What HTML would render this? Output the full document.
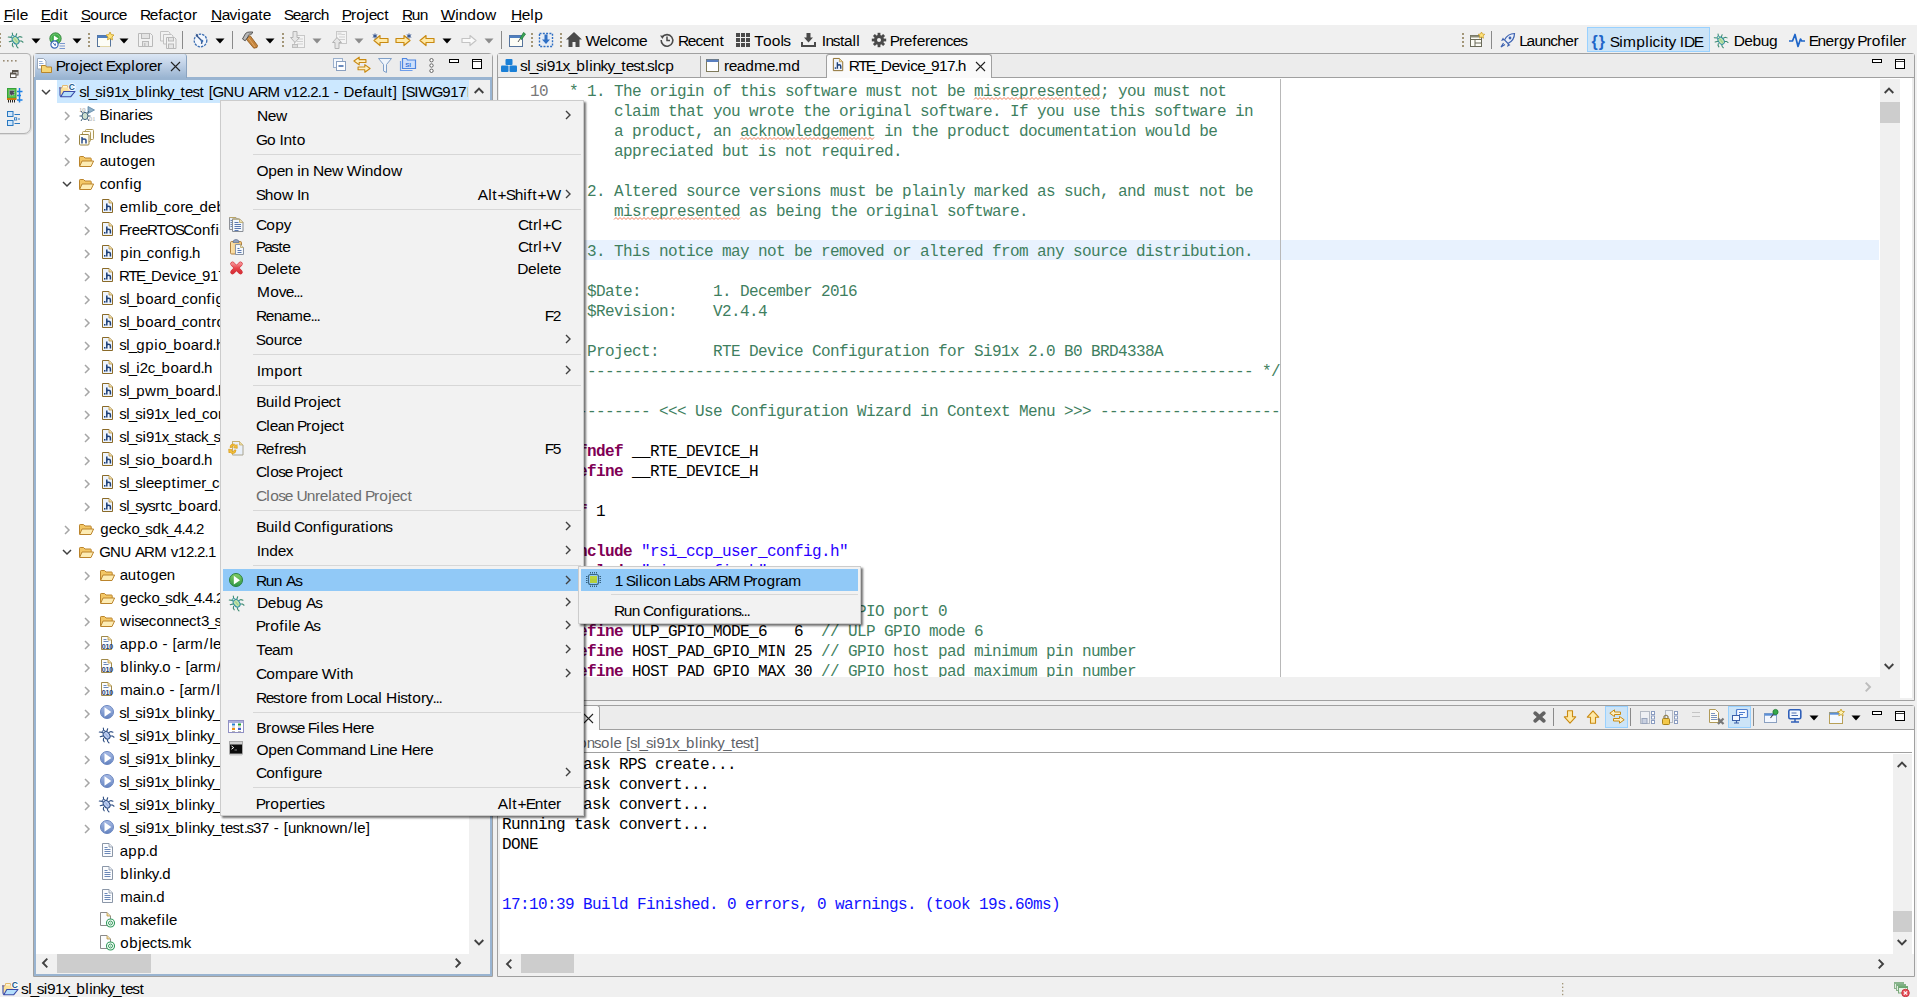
<!DOCTYPE html>
<html><head><meta charset="utf-8"><title>Simplicity IDE</title>
<style>
*{box-sizing:border-box}
html,body{margin:0;padding:0}
body{width:1917px;height:997px;overflow:hidden;background:#f0f0f0;font-family:"Liberation Sans",sans-serif;font-size:15px;color:#000;position:relative}
.a{position:absolute}
.t{position:absolute;white-space:pre;line-height:20px;height:20px}
svg{position:absolute;overflow:visible}
u{text-decoration:underline;text-underline-offset:1px;text-decoration-thickness:1px}
.mono{font-family:"Liberation Mono",monospace;font-size:16px;letter-spacing:-.6px}
.c{color:#3f7f5f}
.k{color:#7f0055;font-weight:bold}
.s{color:#2a00ff}
.us{letter-spacing:-2.1px}
.sg{font-kerning:none}.sg b{font-weight:inherit}.k0{letter-spacing:-0.95px}.k1{letter-spacing:0.55px}.k2{letter-spacing:-0.05px}.k3{letter-spacing:-0.60px}.k4{letter-spacing:-1.00px}.k5{letter-spacing:0.45px}.k6{letter-spacing:0.60px}.k7{letter-spacing:0.70px}.k8{letter-spacing:-0.10px}.k9{letter-spacing:-0.40px}.k10{letter-spacing:-0.45px}.k11{letter-spacing:-0.70px}.k12{letter-spacing:-1.40px}.k13{letter-spacing:0.05px}.k14{letter-spacing:0.10px}.k15{letter-spacing:-0.15px}.k16{letter-spacing:-1.50px}.k17{letter-spacing:-1.25px}.k18{letter-spacing:0.40px}.k19{letter-spacing:-0.20px}.k20{letter-spacing:-0.90px}.k21{letter-spacing:-0.30px}.k22{letter-spacing:-0.55px}.k23{letter-spacing:-0.75px}.k24{letter-spacing:0.20px}.k25{letter-spacing:0.25px}.k26{letter-spacing:-0.80px}.k27{letter-spacing:-1.95px}.k28{letter-spacing:-1.35px}.k29{letter-spacing:-0.65px}.k30{letter-spacing:-1.20px}.k31{letter-spacing:-1.75px}.k32{letter-spacing:0.30px}.k33{letter-spacing:-0.25px}.k34{letter-spacing:-2.35px}.k35{letter-spacing:-1.55px}.k36{letter-spacing:-1.30px}.k37{letter-spacing:0.50px}.k38{letter-spacing:-0.85px}.k39{letter-spacing:-1.90px}.k40{letter-spacing:0.15px}.k41{letter-spacing:-0.35px}.k42{letter-spacing:0.65px}.k43{letter-spacing:-0.50px}.k44{letter-spacing:0.35px}.k45{letter-spacing:0.00px}.k46{letter-spacing:0.75px}.k47{letter-spacing:0.85px}.k48{letter-spacing:-1.10px}.k49{letter-spacing:-1.60px}.k50{letter-spacing:-2.15px}.k51{letter-spacing:-1.15px}.k52{letter-spacing:1.15px}.k53{letter-spacing:1.25px}.k54{letter-spacing:-2.30px}.k55{letter-spacing:-1.80px}.k56{letter-spacing:-1.05px}.k57{letter-spacing:-2.20px}.k58{letter-spacing:-1.70px}.k59{letter-spacing:-2.55px}.k60{letter-spacing:-1.45px}.k61{letter-spacing:0.80px}
</style></head><body>

<div class="a" style="left:0px;top:0px;width:1917px;height:25px;background:#fff"></div>
<div class="t sg" style="left:3.77px;top:5.33px;font-size:15.5px;"><u><b class="k0">F</b></u><b class="k1">i</b><b class="k2">l</b><b class="k3">e</b></div>
<div class="t sg" style="left:40.83px;top:5.33px;font-size:15.5px;"><u><b class="k4">E</b></u><b class="k5">d</b><b class="k6">i</b><b class="k7">t</b></div>
<div class="t sg" style="left:80.83px;top:5.33px;font-size:15.5px;"><u><b class="k4">S</b></u><b class="k8">o</b><b class="k9">u</b><b class="k10">r</b><b class="k11">c</b><b class="k3">e</b></div>
<div class="t sg" style="left:139.90px;top:5.33px;font-size:15.5px;"><b class="k12">R</b><b class="k13">ef</b><b class="k11">a</b><b class="k2">c</b><u><b class="k1">t</b></u><b class="k14">o</b><b class="k15">r</b></div>
<div class="t sg" style="left:210.90px;top:5.33px;font-size:15.5px;"><u><b class="k9">N</b></u><b class="k11">a</b><b class="k8">v</b><b class="k5">i</b><b class="k8">g</b><b class="k13">at</b><b class="k3">e</b></div>
<div class="t sg" style="left:283.83px;top:5.33px;font-size:15.5px;"><b class="k16">S</b><b class="k3">e</b><u><b class="k9">a</b></u><b class="k10">r</b><b class="k11">c</b><b class="k3">h</b></div>
<div class="t sg" style="left:341.83px;top:5.33px;font-size:15.5px;"><u><b class="k17">P</b></u><b class="k14">r</b><b class="k5">o</b><b class="k2">j</b><b class="k11">e</b><b class="k2">c</b><b class="k7">t</b></div>
<div class="t sg" style="left:401.90px;top:5.33px;font-size:15.5px;"><u><b class="k12">R</b></u><b class="k3">un</b></div>
<div class="t sg" style="left:440.69px;top:5.33px;font-size:15.5px;"><u><b class="k2">W</b></u><b class="k2">i</b><b class="k8">n</b><b class="k18">d</b><b class="k14">o</b><b class="k19">w</b></div>
<div class="t sg" style="left:510.90px;top:5.33px;font-size:15.5px;"><u><b class="k9">H</b></u><b class="k2">e</b><b class="k5">l</b><b class="k18">p</b></div>
<div class="a" style="left:0px;top:25px;width:1917px;height:28px;background:#f0f0f0"></div>
<svg style="left:-1px;top:33px" width="2" height="16" viewBox="0 0 2 16"><rect x="0" y="0" width="2" height="2" fill="#a39678"/><rect x="0" y="4" width="2" height="2" fill="#a39678"/><rect x="0" y="8" width="2" height="2" fill="#a39678"/><rect x="0" y="12" width="2" height="2" fill="#a39678"/></svg>
<svg style="left:8px;top:32px" width="16" height="17.0" viewBox="0 0 16 17"><g stroke="#3b8a70" stroke-width="1.100" fill="none" stroke-linecap="round">
<path d="M4.300 1 4.700 3.500M8.700 1.800 7.800 4.300M.3 5 3.500 5.400M1.200 9.700 4.400 8.900M4.600 11.300 4.300 13.200 5.200 14.800M8.300 12.800 8.800 14.500 10 15.800M9.800 5.600 12 4.600 14 5.200M11.300 9 13.500 9 15 10.200"/></g>
<ellipse cx="7.600" cy="8.200" rx="2.900" ry="4.200" transform="rotate(-35 7.600 8.200)" fill="#bfe2aa" stroke="#2a8aa0" stroke-width="1"/>
<path d="M6.300 6.500 9.500 10.500" stroke="#8cc47c" stroke-width=".9"/>
<circle cx="4.700" cy="4.600" r="1.300" fill="#d4ecc4" stroke="#2a8aa0" stroke-width=".9"/></svg>
<svg style="left:31px;top:38px" width="10" height="6" viewBox="0 0 10 6"><path d="M0.5 0.5h9l-4.5 5z" fill="#000"/></svg>
<svg style="left:48.5px;top:31.5px" width="13" height="13" viewBox="0 0 16 16"><circle cx="8" cy="8" r="7" fill="#3fae49" stroke="#2a7d33" stroke-width="1"/><circle cx="8" cy="8" r="5.6" fill="none" stroke="#a9e0a0" stroke-width=".8" opacity=".7"/><path d="M6 4.3 11.6 8 6 11.7z" fill="#fff"/></svg>
<svg style="left:50px;top:40px" width="16" height="10" viewBox="0 0 16 10"><circle cx="4.500" cy="4.500" r="3.600" fill="#fff" stroke="#3a68b8" stroke-width="1.200"/><path d="M3.200 2.800 5.200 5.600M5.200 5.600l.3-2" stroke="#3a68b8" stroke-width="1" fill="none"/><path d="M9.500 3.500h5.500M9.500 6h5.500M9.500 8.500h5.500" stroke="#7a98d0" stroke-width="1"/></svg>
<svg style="left:72px;top:38px" width="10" height="6" viewBox="0 0 10 6"><path d="M0.5 0.5h9l-4.5 5z" fill="#000"/></svg>
<svg style="left:88px;top:33px" width="2" height="16" viewBox="0 0 2 16"><rect x="0" y="0" width="2" height="2" fill="#a39678"/><rect x="0" y="4" width="2" height="2" fill="#a39678"/><rect x="0" y="8" width="2" height="2" fill="#a39678"/><rect x="0" y="12" width="2" height="2" fill="#a39678"/></svg>
<svg style="left:97px;top:32px" width="17" height="16" viewBox="0 0 17 16"><rect x=".5" y="3.5" width="13" height="11" fill="#fdfdf6" stroke="#56749c" stroke-width="1"/><rect x=".5" y="3.5" width="13" height="2.5" fill="#4f7fc0"/><path d="M13 0l1.2 2.6 2.8.4-2 2 .5 2.8L13 6.5 10.5 7.8 11 5 9 3l2.8-.4z" fill="#ffe27a" stroke="#c79a22" stroke-width=".8"/><path d="M3 14.5h10.5" stroke="#e2d7a8" stroke-width="1"/></svg>
<svg style="left:119px;top:38px" width="10" height="6" viewBox="0 0 10 6"><path d="M0.5 0.5h9l-4.5 5z" fill="#000"/></svg>
<svg style="left:138px;top:32px" width="15" height="16" viewBox="0 0 15 16"><path d="M.5 1.5h12l2 2v11H.5z" fill="#f2f2f2" stroke="#b9b9b9"/><rect x="3.5" y="1.5" width="8" height="5" fill="#e4e4e4" stroke="#b9b9b9"/><rect x="4.5" y="9.5" width="6" height="5" fill="#e4e4e4" stroke="#b9b9b9"/><rect x="6" y="11" width="1.5" height="3" fill="#c4c4c4"/></svg>
<svg style="left:160px;top:31px" width="17" height="18" viewBox="0 0 17 18"><path d="M.5 .5h8l1.5 1.5v8H.5z" fill="#f2f2f2" stroke="#c2c2c2"/><path d="M3.500 3.500h8l1.5 1.500v8H3.500z" fill="#f2f2f2" stroke="#c2c2c2"/><path d="M6.500 6.500h8l1.500 1.500v9.500H6.500z" fill="#f2f2f2" stroke="#b9b9b9"/><rect x="8.500" y="6.500" width="5" height="3.500" fill="#e4e4e4" stroke="#b9b9b9"/><rect x="8.500" y="13" width="5" height="4.500" fill="#e4e4e4" stroke="#b9b9b9"/></svg>
<div class="a" style="left:182px;top:31px;width:1px;height:18px;background:#8a8a8a"></div>
<svg style="left:193px;top:32px" width="15" height="16" viewBox="0 0 15 16"><circle cx="7.5" cy="8.500" r="6.300" fill="#f3f7fd" stroke="#3d6fb3" stroke-width="1.300" stroke-dasharray="2.400 1"/><path d="M3.500 3.500 9 9M9 9l-.5 2.800" stroke="#35558a" stroke-width="1.400" fill="none"/><path d="M2.500 1.500 5.500 3 4 4.500z" fill="#35558a"/><circle cx="9" cy="9" r="1.300" fill="#3d6fb3"/></svg>
<svg style="left:215px;top:38px" width="10" height="6" viewBox="0 0 10 6"><path d="M0.5 0.5h9l-4.5 5z" fill="#000"/></svg>
<div class="a" style="left:232px;top:31px;width:1px;height:18px;background:#8a8a8a"></div>
<svg style="left:241px;top:31px" width="17" height="18" viewBox="0 0 17 18"><path d="M5.800 7 9 4.500 16.500 14.500 16 16.500 12.800 17.200 5.500 8.500z" fill="#c4843c" stroke="#8a5418" stroke-width=".8" stroke-linejoin="round"/><path d="M7.500 7 14 16" stroke="#e0a868" stroke-width="1"/><path d="M1.500 8 4.500 2.500Q6 1 8.500 1H11.800L10.500 3.200H8.500Q7 4 7 5.800L4.200 9.800Z" fill="#b8b8b8" stroke="#484848" stroke-width=".9" stroke-linejoin="round"/></svg>
<svg style="left:265px;top:38px" width="10" height="6" viewBox="0 0 10 6"><path d="M0.5 0.5h9l-4.5 5z" fill="#000"/></svg>
<svg style="left:282px;top:33px" width="2" height="16" viewBox="0 0 2 16"><rect x="0" y="0" width="2" height="2" fill="#a39678"/><rect x="0" y="4" width="2" height="2" fill="#a39678"/><rect x="0" y="8" width="2" height="2" fill="#a39678"/><rect x="0" y="12" width="2" height="2" fill="#a39678"/></svg>
<svg style="left:290px;top:31px" width="15" height="18" viewBox="0 0 15 18"><rect x="4.500" y="4.500" width="10" height="12" fill="#f4f4f4" stroke="#c8c8c8"/><path d="M7 8h6M7 10.500h6M7 13h6" stroke="#d0d0d0"/><path d="M3 .5h4v6h2.500L5 11.500.5 6.500H3z" fill="#e6e6e6" stroke="#b4b4b4" stroke-linejoin="round"/><rect x="2.500" y="13.500" width="5" height="3" fill="#dcdcdc" stroke="#bdbdbd"/></svg>
<svg style="left:312px;top:38px" width="10" height="6" viewBox="0 0 10 6"><path d="M0.5 0.5h9l-4.5 5z" fill="#8c8c8c"/></svg>
<svg style="left:332px;top:31px" width="15" height="18" viewBox="0 0 15 18"><rect x="4.500" y=".5" width="10" height="12" fill="#f4f4f4" stroke="#c8c8c8"/><path d="M7 3.500h6M7 6h6M7 8.500h6" stroke="#d0d0d0"/><rect x="5.500" y="1.500" width="4" height="2.500" fill="#dcdcdc"/><path d="M3 17.500h4v-6h2.500L5 6.500.5 11.500H3z" fill="#e6e6e6" stroke="#b4b4b4" stroke-linejoin="round"/></svg>
<svg style="left:354px;top:38px" width="10" height="6" viewBox="0 0 10 6"><path d="M0.5 0.5h9l-4.5 5z" fill="#8c8c8c"/></svg>
<svg style="left:372px;top:33px" width="17" height="14" viewBox="0 0 17 14"><g transform="translate(1,1)"><path d="M7 1.500 1 6.500 7 11.500V8.500h8V4.500H7z" fill="#ffe9a6" stroke="#c98a12" stroke-width="1.200" stroke-linejoin="round"/></g><path d="M3 0.5v5M0.7999999999999998 1.7l4.400 2.600M0.7999999999999998 4.3l4.400-2.600" stroke="#2c4d8a" stroke-width="1"/></svg>
<svg style="left:395px;top:33px" width="17" height="14" viewBox="0 0 17 14"><g transform="translate(0,1)"><path d="M9 1.500 15 6.500 9 11.500V8.500H1V4.500h8z" fill="#ffe9a6" stroke="#c98a12" stroke-width="1.200" stroke-linejoin="round"/></g><path d="M14 0.5v5M11.8 1.7l4.400 2.600M11.8 4.3l4.400-2.600" stroke="#2c4d8a" stroke-width="1"/></svg>
<svg style="left:419px;top:34px" width="16" height="13" viewBox="0 0 16 13"><path d="M7 1.500 1 6.500 7 11.500V8.500h8V4.500H7z" fill="#ffe9a6" stroke="#c98a12" stroke-width="1.200" stroke-linejoin="round"/></svg>
<svg style="left:442px;top:38px" width="10" height="6" viewBox="0 0 10 6"><path d="M0.5 0.5h9l-4.5 5z" fill="#000"/></svg>
<svg style="left:461px;top:34px" width="16" height="13" viewBox="0 0 16 13"><path d="M9 1.500 15 6.500 9 11.500V8.500H1V4.500h8z" fill="#fafafa" stroke="#c4c4c4" stroke-width="1.200" stroke-linejoin="round"/></svg>
<svg style="left:484px;top:38px" width="10" height="6" viewBox="0 0 10 6"><path d="M0.5 0.5h9l-4.5 5z" fill="#8c8c8c"/></svg>
<div class="a" style="left:501px;top:31px;width:1px;height:18px;background:#8a8a8a"></div>
<svg style="left:509px;top:31px" width="17" height="17" viewBox="0 0 17 17"><rect x=".5" y="4.500" width="13" height="11" fill="#fdfdf6" stroke="#56749c"/><rect x=".5" y="4.500" width="13" height="2.500" fill="#4f7fc0"/><path d="M11 7.500 14.500 1.500 16.500 3 12.500 8.500z" fill="#3aa655" stroke="#1f7a38" stroke-width=".8"/><path d="M11 8 9 11" stroke="#555" stroke-width="1"/></svg>
<svg style="left:531px;top:33px" width="2" height="16" viewBox="0 0 2 16"><rect x="0" y="0" width="2" height="2" fill="#a39678"/><rect x="0" y="4" width="2" height="2" fill="#a39678"/><rect x="0" y="8" width="2" height="2" fill="#a39678"/><rect x="0" y="12" width="2" height="2" fill="#a39678"/></svg>
<svg style="left:537px;top:31px" width="18" height="18" viewBox="0 0 18 18"><rect x="2.500" y="2.500" width="13" height="13" fill="none" stroke="#2f6fc4" stroke-width="1.400" stroke-dasharray="2 1.300"/><rect x="4.500" y="4.500" width="9" height="9" fill="#dfeaf9"/><path d="M7.500 3.500h3v5h2.500L9 13 5 8.500h2.500z" fill="#2f6fc4"/></svg>
<svg style="left:560px;top:33px" width="2" height="16" viewBox="0 0 2 16"><rect x="0" y="0" width="2" height="2" fill="#a39678"/><rect x="0" y="4" width="2" height="2" fill="#a39678"/><rect x="0" y="8" width="2" height="2" fill="#a39678"/><rect x="0" y="12" width="2" height="2" fill="#a39678"/></svg>
<svg style="left:566px;top:32px" width="16" height="15" viewBox="0 0 16 15"><path d="M8 0 0 7.500h2.500V15h4v-5h3v5h4V7.500H16z" fill="#4a4a4a"/></svg>
<div class="t sg" style="left:585.54px;top:31.33px;font-size:15.5px;"><b class="k20">W</b><b class="k21">e</b><b class="k9">l</b><b class="k10">c</b><b class="k2">o</b><b class="k22">m</b><b class="k20">e</b></div>
<svg style="left:660px;top:33px" width="14" height="14" viewBox="0 0 14 14"><path d="M2.300 4A5.800 5.800 0 1 1 1.200 7" fill="none" stroke="#4a4a4a" stroke-width="1.600"/><path d="M0 2.500 4 2.800 2.500 6z" fill="#4a4a4a"/><path d="M7 3.500v4h3" fill="none" stroke="#4a4a4a" stroke-width="1.500"/></svg>
<div class="t sg" style="left:677.90px;top:31.33px;font-size:15.5px;"><b class="k12">R</b><b class="k11">ec</b><b class="k3">e</b><b class="k13">n</b><b class="k7">t</b></div>
<svg style="left:736px;top:33px" width="14" height="14" viewBox="0 0 14 14"><rect x="0" y="0" width="4" height="4" fill="#4a4a4a"/><rect x="0" y="5" width="4" height="4" fill="#4a4a4a"/><rect x="0" y="10" width="4" height="4" fill="#4a4a4a"/><rect x="5" y="0" width="4" height="4" fill="#4a4a4a"/><rect x="5" y="5" width="4" height="4" fill="#4a4a4a"/><rect x="5" y="10" width="4" height="4" fill="#4a4a4a"/><rect x="10" y="0" width="4" height="4" fill="#4a4a4a"/><rect x="10" y="5" width="4" height="4" fill="#4a4a4a"/><rect x="10" y="10" width="4" height="4" fill="#4a4a4a"/></svg>
<div class="t sg" style="left:754.17px;top:31.33px;font-size:15.5px;"><b class="k23">T</b><b class="k24">o</b><b class="k25">o</b><b class="k26">l</b><b class="k27">s</b></div>
<svg style="left:801px;top:33px" width="15" height="14" viewBox="0 0 15 14"><path d="M5.500 0h4v4.500H12L7.500 9.500 3 4.500h2.500z" fill="#4a4a4a"/><path d="M1 9v4h13V9" fill="none" stroke="#4a4a4a" stroke-width="2"/></svg>
<div class="t sg" style="left:821.78px;top:31.33px;font-size:15.5px;"><b class="k3">I</b><b class="k28">n</b><b class="k29">s</b><b class="k8">t</b><b class="k19">a</b><b class="k18">ll</b></div>
<svg style="left:872px;top:33px" width="14" height="14" viewBox="0 0 14 14"><g fill="#4a4a4a"><circle cx="7" cy="7" r="5"/><rect x="5.600" y="-.2" width="2.800" height="3.200" transform="rotate(0 7 7)"/><rect x="5.600" y="-.2" width="2.800" height="3.200" transform="rotate(45 7 7)"/><rect x="5.600" y="-.2" width="2.800" height="3.200" transform="rotate(90 7 7)"/><rect x="5.600" y="-.2" width="2.800" height="3.200" transform="rotate(135 7 7)"/><rect x="5.600" y="-.2" width="2.800" height="3.200" transform="rotate(180 7 7)"/><rect x="5.600" y="-.2" width="2.800" height="3.200" transform="rotate(225 7 7)"/><rect x="5.600" y="-.2" width="2.800" height="3.200" transform="rotate(270 7 7)"/><rect x="5.600" y="-.2" width="2.800" height="3.200" transform="rotate(315 7 7)"/></g><circle cx="7" cy="7" r="2" fill="#f0f0f0"/></svg>
<div class="t sg" style="left:889.83px;top:31.33px;font-size:15.5px;"><b class="k17">P</b><b class="k9">r</b><b class="k13">ef</b><b class="k9">er</b><b class="k3">e</b><b class="k11">nc</b><b class="k30">e</b><b class="k31">s</b></div>
<svg style="left:1462px;top:33px" width="2" height="16" viewBox="0 0 2 16"><rect x="0" y="0" width="2" height="2" fill="#a39678"/><rect x="0" y="4" width="2" height="2" fill="#a39678"/><rect x="0" y="8" width="2" height="2" fill="#a39678"/><rect x="0" y="12" width="2" height="2" fill="#a39678"/></svg>
<svg style="left:1470px;top:32px" width="15" height="16" viewBox="0 0 15 16"><rect x=".5" y="3.500" width="11" height="11" fill="#fdfdf6" stroke="#6b6b5a"/><path d="M.5 7.500h11M5 7.500v7M5 11h6.500" stroke="#6b6b5a"/><rect x=".5" y="3.500" width="11" height="2" fill="#8c8c78"/><path d="M11.500 0l1 2 2.300.3-1.700 1.600.4 2.300-2-1.100-2 1.100.4-2.300L8.200 2.300l2.300-.3z" fill="#ffe27a" stroke="#c79a22" stroke-width=".7"/></svg>
<div class="a" style="left:1491px;top:31px;width:1px;height:18px;background:#8a8a8a"></div>
<svg style="left:1500px;top:33px" width="15" height="15" viewBox="0 0 15 15"><path d="M14.500 .5c-5 0-8 2.500-10 6.500l3.500 3.500c4-2 6.500-5 6.500-10z" fill="#eaf0fb" stroke="#3d62b0" stroke-width="1.200"/><circle cx="10" cy="5" r="1.400" fill="#3d62b0"/><path d="M4.500 7 1 8l2-3.500zM8 10.500 7 14l3.500-2z" fill="#3d62b0"/><path d="M3.500 10 1 14l4-2.500" fill="none" stroke="#3d62b0" stroke-width="1.200"/></svg>
<div class="t sg" style="left:1519.16px;top:31.33px;font-size:15.5px;"><b class="k30">L</b><b class="k11">au</b><b class="k23">nc</b><b class="k11">h</b><b class="k10">e</b><b class="k19">r</b></div>
<div class="a" style="left:1587px;top:27px;width:123px;height:25px;background:#cce4f7;border:1px solid #99d1ff"></div>
<div class="t" style="left:1591.5px;top:31.66px;font-size:16px;font-weight:bold;color:#1f66c8;letter-spacing:1px">{}</div>
<div class="t sg" style="left:1609.83px;top:31.83px;font-size:15.5px;"><b class="k20">S</b><b class="k32">i</b><b class="k25">m</b><b class="k5">p</b><b class="k1">l</b><b class="k8">ic</b><b class="k6">i</b><b class="k2">t</b><b class="k22">y</b><b class="k21"> </b><b class="k33">I</b><b class="k17">D</b><b class="k34">E</b></div>
<svg style="left:1714px;top:33px" width="15" height="15.9375" viewBox="0 0 16 17"><g stroke="#3b8a70" stroke-width="1.100" fill="none" stroke-linecap="round">
<path d="M4.300 1 4.700 3.500M8.700 1.800 7.800 4.300M.3 5 3.500 5.400M1.200 9.700 4.400 8.900M4.600 11.300 4.300 13.200 5.200 14.800M8.300 12.800 8.800 14.500 10 15.800M9.800 5.600 12 4.600 14 5.200M11.300 9 13.500 9 15 10.200"/></g>
<ellipse cx="7.600" cy="8.200" rx="2.900" ry="4.200" transform="rotate(-35 7.600 8.200)" fill="#bfe2aa" stroke="#2a8aa0" stroke-width="1"/>
<path d="M6.300 6.500 9.500 10.500" stroke="#8cc47c" stroke-width=".9"/>
<circle cx="4.700" cy="4.600" r="1.300" fill="#d4ecc4" stroke="#2a8aa0" stroke-width=".9"/></svg>
<div class="t sg" style="left:1733.75px;top:31.33px;font-size:15.5px;"><b class="k11">D</b><b class="k9">ebu</b><b class="k14">g</b></div>
<svg style="left:1789px;top:33px" width="16" height="15" viewBox="0 0 16 15"><path d="M0 8h3.500L6 1.500 9 13.500 11.500 6l1.200 2H16" fill="none" stroke="#1f66c8" stroke-width="1.700" stroke-linejoin="round"/></svg>
<div class="t sg" style="left:1808.80px;top:31.33px;font-size:15.5px;"><b class="k35">E</b><b class="k11">n</b><b class="k10">e</b><b class="k13">r</b><b class="k33">g</b><b class="k3">y</b><b class="k12"> </b><b class="k36">P</b><b class="k13">r</b><b class="k5">o</b><b class="k1">f</b><b class="k37">i</b><b class="k8">l</b><b class="k10">e</b><b class="k33">r</b></div>
<div class="a" style="left:-2px;top:53px;width:33px;height:81px;background:#f0f0f0;border:1px solid #b4b4b4;border-radius:0 4px 7px 0;box-shadow:1px 1px 0 #dedede"></div>
<svg style="left:3px;top:59.5px" width="14" height="2" viewBox="0 0 14 2"><rect x="0" y="0" width="1.600" height="1.600" fill="#9a8c74"/><rect x="4" y="0" width="1.600" height="1.600" fill="#9a8c74"/><rect x="8" y="0" width="1.600" height="1.600" fill="#9a8c74"/><rect x="12" y="0" width="1.600" height="1.600" fill="#9a8c74"/></svg>
<svg style="left:10px;top:70px" width="9" height="9" viewBox="0 0 9 9"><rect x="2.500" y=".5" width="5.500" height="4.500" fill="#f4f4f4" stroke="#5a544c"/><rect x="2.500" y=".5" width="5.500" height="1.500" fill="#5a544c"/><rect x=".5" y="3" width="5.500" height="4.500" fill="#fff" stroke="#5a544c"/><rect x=".5" y="3" width="5.500" height="1.500" fill="#5a544c"/></svg>
<svg style="left:7px;top:88px" width="16" height="15" viewBox="0 0 16 15"><rect x=".5" y=".5" width="8.500" height="9.500" fill="#5cc450" stroke="#36a03a"/><rect x="2.500" y="2.500" width="4.500" height="4.500" fill="#4a4a58" stroke="#c8c0e8" stroke-width=".8" stroke-dasharray="1 1"/><rect x="0" y="10" width="9.500" height="2" fill="#c87810"/><path d="M1.500 12v2.500M3.500 12v2.500M5.500 12v2.500M7.500 12v2.500" stroke="#222" stroke-width="1"/><path d="M12.500 0v14.500M10 3.500h5.500M10 7.500h4M10 12h5.500" stroke="#1a80e8" stroke-width="1.500"/></svg>
<svg style="left:7px;top:111px" width="14" height="15" viewBox="0 0 14 15"><rect x=".5" y=".5" width="5.500" height="5" fill="#cfe6fb" stroke="#2a78c0"/><rect x=".5" y="9.500" width="5.500" height="5" fill="#cfe6fb" stroke="#2a78c0"/><path d="M7.500 3.500h5.500M7.500 12.500h5.500M11 8h2" stroke="#2a78c0" stroke-width="1.200"/><rect x="7.500" y="6.800" width="2.200" height="2.200" fill="#fff" stroke="#2a78c0" stroke-width=".9"/></svg>
<div class="a" style="left:33px;top:53px;width:460px;height:924px;background:#fff;border:1px solid #a0a0a0;border-radius:4px 4px 0 0"></div>
<div class="a" style="left:34px;top:54px;width:458px;height:922px;border:2px solid #99b4d1;border-top:none;background:#fff"></div>
<div class="a" style="left:34px;top:54px;width:458px;height:23px;background:#ececec"></div>
<div class="a" style="left:34px;top:77px;width:458px;height:3px;background:#99b4d1"></div>
<div class="a" style="left:35px;top:54px;width:152px;height:24px;background:linear-gradient(#dbe6f4,#c3d3e8 40%,#99b4d1);border-right:1px solid #8aa3c0;border-top-right-radius:3px"></div>
<svg style="left:37px;top:58px" width="16" height="16" viewBox="0 0 16 16"><path d="M.5 .5h6l2.500 2.500v8h-8.500z" fill="#fff" stroke="#9aa7b8"/><path d="M2 3.500h3.500M2 5.500h4.500M2 7.500h4.500" stroke="#7f9ed0" stroke-width=".8"/><path d="M4.500 14.500v-7h4l1 1.500h5v5.500z" fill="#f6d676" stroke="#b8862d"/></svg>
<div class="t sg" style="left:55.83px;top:56.33px;font-size:15.5px;"><b class="k17">P</b><b class="k14">r</b><b class="k5">o</b><b class="k2">j</b><b class="k11">e</b><b class="k2">c</b><b class="k24">t</b><b class="k36"> </b><b class="k35">E</b><b class="k19">x</b><b class="k5">pl</b><b class="k14">o</b><b class="k9">re</b><b class="k15">r</b></div>
<svg style="left:171.0px;top:62.2px" width="9.0" height="9.0" viewBox="0 0 9.0 9.0"><path d="M0 0 9.0 9.0M9.0 0 0 9.0" stroke="#222" stroke-width="1.1"/></svg>
<svg style="left:333px;top:58px" width="14" height="14" viewBox="0 0 14 14"><rect x=".5" y=".5" width="9" height="9" fill="#f4f8fd" stroke="#9bb0cc"/><rect x="3.500" y="3.500" width="9" height="9" fill="#fff" stroke="#8aa0c0"/><path d="M5.500 8h5" stroke="#2c5aa0" stroke-width="1.400"/></svg>
<svg style="left:353px;top:56px" width="18" height="18" viewBox="0 0 16 15.500"><path d="M5.500 .8.800 4.200 5.500 7.600V5.500H11.500V3H5.500z" fill="#fdf0c4" stroke="#c98a12" stroke-linejoin="round"/><path d="M10.500 7.400 15.200 10.800 10.500 14.200V12H4.500V9.500H10.500z" fill="#fdf0c4" stroke="#c98a12" stroke-linejoin="round"/></svg>
<svg style="left:378px;top:58px" width="14" height="15" viewBox="0 0 14 15"><path d="M.5 .5h13L8.500 6.500v8l-3-1.500V6.500z" fill="#eef4fb" stroke="#7f9fc8" stroke-linejoin="round"/></svg>
<svg style="left:400px;top:58px" width="17" height="15" viewBox="0 0 17 15"><path d="M.5 3v9.500h12" fill="none" stroke="#6f9eea" stroke-width="1.200"/><path d="M2.500 10.500v-10h4l1 1.500h8v8.500z" fill="#cfe0fb" stroke="#4f86e0" stroke-width="1.200"/><text x="5.300" y="9" font-family="Liberation Sans" font-size="6" font-weight="bold" fill="#2f6fd8">SI</text></svg>
<svg style="left:429px;top:58px" width="5" height="15" viewBox="0 0 5 15"><circle cx="2.500" cy="2.200" r="1.700" fill="#fff" stroke="#555" stroke-width=".9"/><circle cx="2.500" cy="7.500" r="1.700" fill="#fff" stroke="#555" stroke-width=".9"/><circle cx="2.500" cy="12.800" r="1.700" fill="#fff" stroke="#555" stroke-width=".9"/></svg>
<svg style="left:449px;top:59px" width="10" height="4" viewBox="0 0 10 4"><rect x=".5" y=".5" width="9" height="3" fill="#fff" stroke="#000" stroke-width="1"/></svg>
<svg style="left:472px;top:59px" width="10" height="10" viewBox="0 0 10 10"><rect x=".5" y=".5" width="9" height="9" fill="#fff" stroke="#000" stroke-width="1"/><path d="M1 2.500h8" stroke="#333" stroke-width="1"/></svg>
<div class="a" style="left:57px;top:80px;width:412px;height:23px;background:#cce8ff"></div>
<svg style="left:41px;top:89px" width="10" height="6" viewBox="0 0 10 6"><path d="M1 1 5 5 9 1" stroke="#404040" stroke-width="1.500" fill="none"/></svg>
<svg style="left:58px;top:83px" width="18" height="16" viewBox="0 0 18 16"><path d="M2 13V4.500h2V2.800q0-.8.800-.8h4.400q.8 0 .8.800V4.500h2V9H5.500z" fill="#fbe19a"/>
<path d="M4.500 4.500V3q0-.5.500-.5h4q.5 0 .5.500V4.500" fill="#fdf3d8" stroke="#e0b468" stroke-width=".9"/>
<path d="M1 4.800h2.800" stroke="#8a7088" stroke-width="1"/>
<path d="M2 4.800V12q0 1.500 1.300 1.500" fill="none" stroke="#3a4aa8" stroke-width="1.100"/>
<path d="M5.800 8.500H17l-4.200 5.200H2.800z" fill="#b4defc" stroke="#3a4aa8" stroke-width="1.100" stroke-linejoin="round"/>
<text x="10.800" y="7.400" font-family="Liberation Sans" font-size="8.500" font-weight="bold" fill="#1a5a8a" stroke="#fff" stroke-width="1.600" paint-order="stroke">C</text></svg>
<div class="t sg" style="left:79.25px;top:81.70px;width:389px;overflow:hidden"><b class="k9">s</b><b class="k38">l</b><b class="k39">_</b><b class="k9">s</b><b class="k40">i</b><b class="k41">9</b><b class="k9">1</b><b class="k12">x</b><b class="k38">_</b><b class="k42">bl</b><b class="k40">i</b><b class="k9">n</b><b class="k43">k</b><b class="k12">y</b><b class="k23">_</b><b class="k25">t</b><b class="k20">e</b><b class="k41">s</b><b class="k44">t </b><b class="k9">[</b><b class="k23">G</b><b class="k41">N</b><b class="k43">U</b><b class="k8"> </b><b class="k20">A</b><b class="k29">R</b><b class="k40">M</b><b class="k41"> </b><b class="k9">v</b><b class="k41">1</b><b class="k23">2.2.</b><b class="k33">1</b><b class="k18"> -</b><b class="k45"> </b><b class="k8">D</b><b class="k25">ef</b><b class="k41">a</b><b class="k40">u</b><b class="k46">l</b><b class="k47">t</b><b class="k44">] </b><b class="k3">[</b><b class="k48">S</b><b class="k15">I</b><b class="k20">W</b><b class="k4">G</b><b class="k41">91</b><b class="k14">7M</b><b class="k41">11</b><b class="k14">1</b><b class="k3">M</b><b class="k12">G</b><b class="k48">T</b><b class="k43">B</b><b class="k8">A</b><b class="k18"> -</b><b class="k20"> </b><b class="k4">G</b><b class="k9">e</b><b class="k43">c</b><b class="k14">k</b><b class="k25">o</b><b class="k48"> </b><b class="k20">S</b><b class="k9">D</b><b class="k4">K</b></div>
<svg style="left:64px;top:110.5px" width="6" height="10" viewBox="0 0 6 10"><path d="M1 1 5 5 1 9" stroke="#a6a6a6" stroke-width="1.500" fill="none"/></svg>
<svg style="left:79px;top:106px" width="18" height="17" viewBox="0 0 18 17"><text x="0" y="6" font-family="Liberation Serif" font-size="6.500" fill="#999">10</text><text x="10" y="15" font-family="Liberation Serif" font-size="6.500" fill="#aaa">01</text>
<path d="M9 .5 15.500 4 9 7.500z" fill="#8fb0c8" stroke="#5c86a6" stroke-width=".8"/>
<g stroke="#3e5f7a" stroke-width="1" fill="none"><path d="M3.500 7 2 5M8.500 7l1.500-2M3 10H.5M9 10h2.500M3.500 12.500 2 15M8.500 12.500l1.500 2.500"/></g><ellipse cx="6" cy="10" rx="3" ry="3.600" fill="#cfe0d0" stroke="#3e5f7a"/></svg>
<div class="t sg" style="left:99.50px;top:104.70px;width:369px;overflow:hidden"><b class="k15">B</b><b class="k40">i</b><b class="k41">n</b><b class="k15">a</b><b class="k44">r</b><b class="k40">i</b><b class="k20">e</b><b class="k16">s</b></div>
<svg style="left:64px;top:133.5px" width="6" height="10" viewBox="0 0 6 10"><path d="M1 1 5 5 1 9" stroke="#a6a6a6" stroke-width="1.500" fill="none"/></svg>
<svg style="left:79px;top:129px" width="16" height="17" viewBox="0 0 16 17"><rect x="6.500" y=".5" width="8" height="10" rx="1" fill="#fffdf4" stroke="#b09a58"/><rect x="3.500" y="2.500" width="8" height="10" rx="1" fill="#fffdf4" stroke="#b09a58"/><rect x=".5" y="5.500" width="9.500" height="10.500" rx="1" fill="#fffdf4" stroke="#9a8442"/>
<path d="M3 8v6.500M3 11.500q0-1.500 2-1.500t2 1.500v3" stroke="#2c4d8a" stroke-width="1.500" fill="none"/></svg>
<div class="t sg" style="left:99.92px;top:127.70px;width:369px;overflow:hidden"><b class="k33">I</b><b class="k9">n</b><b class="k14">c</b><b class="k40">lud</b><b class="k20">e</b><b class="k16">s</b></div>
<svg style="left:64px;top:156.5px" width="6" height="10" viewBox="0 0 6 10"><path d="M1 1 5 5 1 9" stroke="#a6a6a6" stroke-width="1.500" fill="none"/></svg>
<svg style="left:78px;top:153px" width="17" height="16" viewBox="0 0 17 16"><path d="M1.500 13V4.200q0-.7.700-.7h3.300l1.500 1.500h5.500q.7 0 .7.700V8" fill="#f3c766" stroke="#bb842c"/>
<path d="M1.600 13.500 4 8h11.600l-2.600 5.500z" fill="#fdecb4" stroke="#bb842c" stroke-linejoin="round"/></svg>
<div class="t sg" style="left:99.83px;top:150.70px;width:369px;overflow:hidden"><b class="k41">a</b><b class="k25">u</b><b class="k46">t</b><b class="k42">o</b><b class="k40">g</b><b class="k41">en</b></div>
<svg style="left:62px;top:181px" width="10" height="6" viewBox="0 0 10 6"><path d="M1 1 5 5 9 1" stroke="#404040" stroke-width="1.500" fill="none"/></svg>
<svg style="left:78px;top:176px" width="17" height="16" viewBox="0 0 17 16"><path d="M1.500 13V4.200q0-.7.700-.7h3.300l1.500 1.500h5.500q.7 0 .7.700V8" fill="#f3c766" stroke="#bb842c"/>
<path d="M1.600 13.500 4 8h11.600l-2.600 5.500z" fill="#fdecb4" stroke="#bb842c" stroke-linejoin="round"/></svg>
<div class="t sg" style="left:99.75px;top:173.70px;width:369px;overflow:hidden"><b class="k14">c</b><b class="k40">o</b><b class="k25">n</b><b class="k46">f</b><b class="k42">ig</b></div>
<svg style="left:84px;top:202.5px" width="6" height="10" viewBox="0 0 6 10"><path d="M1 1 5 5 1 9" stroke="#a6a6a6" stroke-width="1.500" fill="none"/></svg>
<svg style="left:100px;top:198px" width="16" height="17" viewBox="0 0 16 17"><path d="M2.500 1.500h6.500l3.500 3.500v9.500h-10z" fill="#eef4fc" stroke="#8a6a28"/><path d="M9 1.500v3.500h3.500" fill="#f3dfa4" stroke="#b8964a" stroke-width=".8"/>
<rect x="4" y="11" width="1.500" height="1.600" fill="#1c3f78"/><path d="M6.800 5.500v7.100M6.800 9.800q0-1.600 1.800-1.600t1.800 1.600v2.800" stroke="#1c3f78" stroke-width="1.500" fill="none"/></svg>
<div class="t sg" style="left:119.83px;top:196.70px;width:349px;overflow:hidden"><b class="k14">e</b><b class="k6">m</b><b class="k42">li</b><b class="k38">b</b><b class="k12">_</b><b class="k14">c</b><b class="k44">o</b><b class="k15">r</b><b class="k28">e</b><b class="k38">_</b><b class="k40">debu</b><b class="k38">g</b><b class="k12">_</b><b class="k14">c</b><b class="k40">o</b><b class="k25">n</b><b class="k46">f</b><b class="k42">i</b><b class="k33">g</b><b class="k23">.</b><b class="k41">h</b></div>
<svg style="left:84px;top:225.5px" width="6" height="10" viewBox="0 0 6 10"><path d="M1 1 5 5 1 9" stroke="#a6a6a6" stroke-width="1.500" fill="none"/></svg>
<svg style="left:100px;top:221px" width="16" height="17" viewBox="0 0 16 17"><path d="M2.500 1.500h6.500l3.500 3.500v9.500h-10z" fill="#eef4fc" stroke="#8a6a28"/><path d="M9 1.500v3.500h3.500" fill="#f3dfa4" stroke="#b8964a" stroke-width=".8"/>
<rect x="4" y="11" width="1.500" height="1.600" fill="#1c3f78"/><path d="M6.800 5.500v7.100M6.800 9.800q0-1.600 1.800-1.600t1.800 1.600v2.800" stroke="#1c3f78" stroke-width="1.500" fill="none"/></svg>
<div class="t sg" style="left:118.92px;top:219.70px;width:349px;overflow:hidden"><b class="k48">F</b><b class="k15">r</b><b class="k41">e</b><b class="k48">e</b><b class="k16">R</b><b class="k20">T</b><b class="k28">O</b><b class="k39">S</b><b class="k3">C</b><b class="k40">o</b><b class="k25">n</b><b class="k46">f</b><b class="k42">i</b><b class="k33">g</b><b class="k23">.</b><b class="k41">h</b></div>
<svg style="left:84px;top:248.5px" width="6" height="10" viewBox="0 0 6 10"><path d="M1 1 5 5 1 9" stroke="#a6a6a6" stroke-width="1.500" fill="none"/></svg>
<svg style="left:100px;top:244px" width="16" height="17" viewBox="0 0 16 17"><path d="M2.500 1.500h6.500l3.500 3.500v9.500h-10z" fill="#eef4fc" stroke="#8a6a28"/><path d="M9 1.500v3.500h3.500" fill="#f3dfa4" stroke="#b8964a" stroke-width=".8"/>
<rect x="4" y="11" width="1.500" height="1.600" fill="#1c3f78"/><path d="M6.800 5.500v7.100M6.800 9.800q0-1.600 1.800-1.600t1.800 1.600v2.800" stroke="#1c3f78" stroke-width="1.500" fill="none"/></svg>
<div class="t sg" style="left:120.33px;top:242.70px;width:349px;overflow:hidden"><b class="k42">p</b><b class="k40">i</b><b class="k28">n</b><b class="k12">_</b><b class="k14">c</b><b class="k40">o</b><b class="k25">n</b><b class="k46">f</b><b class="k42">i</b><b class="k33">g</b><b class="k23">.</b><b class="k41">h</b></div>
<svg style="left:84px;top:271.5px" width="6" height="10" viewBox="0 0 6 10"><path d="M1 1 5 5 1 9" stroke="#a6a6a6" stroke-width="1.500" fill="none"/></svg>
<svg style="left:100px;top:267px" width="16" height="17" viewBox="0 0 16 17"><path d="M2.500 1.500h6.500l3.500 3.500v9.500h-10z" fill="#eef4fc" stroke="#8a6a28"/><path d="M9 1.500v3.500h3.500" fill="#f3dfa4" stroke="#b8964a" stroke-width=".8"/>
<rect x="4" y="11" width="1.500" height="1.600" fill="#1c3f78"/><path d="M6.800 5.500v7.100M6.800 9.800q0-1.600 1.800-1.600t1.800 1.600v2.800" stroke="#1c3f78" stroke-width="1.500" fill="none"/></svg>
<div class="t sg" style="left:119.08px;top:265.70px;width:349px;overflow:hidden"><b class="k16">R</b><b class="k49">T</b><b class="k50">E</b><b class="k48">_</b><b class="k8">D</b><b class="k9">e</b><b class="k14">vi</b><b class="k9">c</b><b class="k28">e_</b><b class="k41">91</b><b class="k23">7.</b><b class="k41">h</b></div>
<svg style="left:84px;top:294.5px" width="6" height="10" viewBox="0 0 6 10"><path d="M1 1 5 5 1 9" stroke="#a6a6a6" stroke-width="1.500" fill="none"/></svg>
<svg style="left:100px;top:290px" width="16" height="17" viewBox="0 0 16 17"><path d="M2.500 1.500h6.500l3.500 3.500v9.500h-10z" fill="#eef4fc" stroke="#8a6a28"/><path d="M9 1.500v3.500h3.500" fill="#f3dfa4" stroke="#b8964a" stroke-width=".8"/>
<rect x="4" y="11" width="1.500" height="1.600" fill="#1c3f78"/><path d="M6.800 5.500v7.100M6.800 9.800q0-1.600 1.800-1.600t1.800 1.600v2.800" stroke="#1c3f78" stroke-width="1.500" fill="none"/></svg>
<div class="t sg" style="left:119.25px;top:288.70px;width:349px;overflow:hidden"><b class="k9">s</b><b class="k38">l_</b><b class="k42">b</b><b class="k40">o</b><b class="k15">a</b><b class="k44">r</b><b class="k38">d</b><b class="k12">_</b><b class="k14">c</b><b class="k40">o</b><b class="k25">n</b><b class="k46">f</b><b class="k42">i</b><b class="k40">g</b><b class="k15">ur</b><b class="k25">a</b><b class="k46">t</b><b class="k42">i</b><b class="k40">o</b><b class="k23">n.</b><b class="k41">h</b></div>
<svg style="left:84px;top:317.5px" width="6" height="10" viewBox="0 0 6 10"><path d="M1 1 5 5 1 9" stroke="#a6a6a6" stroke-width="1.500" fill="none"/></svg>
<svg style="left:100px;top:313px" width="16" height="17" viewBox="0 0 16 17"><path d="M2.500 1.500h6.500l3.500 3.500v9.500h-10z" fill="#eef4fc" stroke="#8a6a28"/><path d="M9 1.500v3.500h3.500" fill="#f3dfa4" stroke="#b8964a" stroke-width=".8"/>
<rect x="4" y="11" width="1.500" height="1.600" fill="#1c3f78"/><path d="M6.800 5.500v7.100M6.800 9.800q0-1.600 1.800-1.600t1.800 1.600v2.800" stroke="#1c3f78" stroke-width="1.500" fill="none"/></svg>
<div class="t sg" style="left:119.25px;top:311.70px;width:349px;overflow:hidden"><b class="k9">s</b><b class="k38">l_</b><b class="k42">b</b><b class="k40">o</b><b class="k15">a</b><b class="k44">r</b><b class="k38">d</b><b class="k12">_</b><b class="k14">c</b><b class="k40">o</b><b class="k25">n</b><b class="k18">t</b><b class="k44">r</b><b class="k42">o</b><b class="k38">l</b><b class="k12">_</b><b class="k14">c</b><b class="k40">o</b><b class="k25">n</b><b class="k46">f</b><b class="k42">i</b><b class="k33">g</b><b class="k23">.</b><b class="k41">h</b></div>
<svg style="left:84px;top:340.5px" width="6" height="10" viewBox="0 0 6 10"><path d="M1 1 5 5 1 9" stroke="#a6a6a6" stroke-width="1.500" fill="none"/></svg>
<svg style="left:100px;top:336px" width="16" height="17" viewBox="0 0 16 17"><path d="M2.500 1.500h6.500l3.500 3.500v9.500h-10z" fill="#eef4fc" stroke="#8a6a28"/><path d="M9 1.500v3.500h3.500" fill="#f3dfa4" stroke="#b8964a" stroke-width=".8"/>
<rect x="4" y="11" width="1.500" height="1.600" fill="#1c3f78"/><path d="M6.800 5.500v7.100M6.800 9.800q0-1.600 1.800-1.600t1.800 1.600v2.800" stroke="#1c3f78" stroke-width="1.500" fill="none"/></svg>
<div class="t sg" style="left:119.25px;top:334.70px;width:349px;overflow:hidden"><b class="k9">s</b><b class="k38">l_</b><b class="k42">gpi</b><b class="k38">o_</b><b class="k42">b</b><b class="k40">o</b><b class="k15">a</b><b class="k44">r</b><b class="k33">d</b><b class="k23">.</b><b class="k41">h</b></div>
<svg style="left:84px;top:363.5px" width="6" height="10" viewBox="0 0 6 10"><path d="M1 1 5 5 1 9" stroke="#a6a6a6" stroke-width="1.500" fill="none"/></svg>
<svg style="left:100px;top:359px" width="16" height="17" viewBox="0 0 16 17"><path d="M2.500 1.500h6.500l3.500 3.500v9.500h-10z" fill="#eef4fc" stroke="#8a6a28"/><path d="M9 1.500v3.500h3.500" fill="#f3dfa4" stroke="#b8964a" stroke-width=".8"/>
<rect x="4" y="11" width="1.500" height="1.600" fill="#1c3f78"/><path d="M6.800 5.500v7.100M6.800 9.800q0-1.600 1.800-1.600t1.800 1.600v2.800" stroke="#1c3f78" stroke-width="1.500" fill="none"/></svg>
<div class="t sg" style="left:119.25px;top:357.70px;width:349px;overflow:hidden"><b class="k9">s</b><b class="k38">l_</b><b class="k40">i</b><b class="k9">2</b><b class="k12">c</b><b class="k38">_</b><b class="k42">b</b><b class="k40">o</b><b class="k15">a</b><b class="k44">r</b><b class="k33">d</b><b class="k23">.</b><b class="k41">h</b></div>
<svg style="left:84px;top:386.5px" width="6" height="10" viewBox="0 0 6 10"><path d="M1 1 5 5 1 9" stroke="#a6a6a6" stroke-width="1.500" fill="none"/></svg>
<svg style="left:100px;top:382px" width="16" height="17" viewBox="0 0 16 17"><path d="M2.500 1.500h6.500l3.500 3.500v9.500h-10z" fill="#eef4fc" stroke="#8a6a28"/><path d="M9 1.500v3.500h3.500" fill="#f3dfa4" stroke="#b8964a" stroke-width=".8"/>
<rect x="4" y="11" width="1.500" height="1.600" fill="#1c3f78"/><path d="M6.800 5.500v7.100M6.800 9.800q0-1.600 1.800-1.600t1.800 1.600v2.800" stroke="#1c3f78" stroke-width="1.500" fill="none"/></svg>
<div class="t sg" style="left:119.25px;top:380.70px;width:349px;overflow:hidden"><b class="k9">s</b><b class="k38">l_</b><b class="k18">p</b><b class="k44">w</b><b class="k20">m</b><b class="k38">_</b><b class="k42">b</b><b class="k40">o</b><b class="k15">a</b><b class="k44">r</b><b class="k33">d</b><b class="k23">.</b><b class="k41">h</b></div>
<svg style="left:84px;top:409.5px" width="6" height="10" viewBox="0 0 6 10"><path d="M1 1 5 5 1 9" stroke="#a6a6a6" stroke-width="1.500" fill="none"/></svg>
<svg style="left:100px;top:405px" width="16" height="17" viewBox="0 0 16 17"><path d="M2.500 1.500h6.500l3.500 3.500v9.500h-10z" fill="#eef4fc" stroke="#8a6a28"/><path d="M9 1.500v3.500h3.500" fill="#f3dfa4" stroke="#b8964a" stroke-width=".8"/>
<rect x="4" y="11" width="1.500" height="1.600" fill="#1c3f78"/><path d="M6.800 5.500v7.100M6.800 9.800q0-1.600 1.800-1.600t1.800 1.600v2.800" stroke="#1c3f78" stroke-width="1.500" fill="none"/></svg>
<div class="t sg" style="left:119.25px;top:403.70px;width:349px;overflow:hidden"><b class="k9">s</b><b class="k38">l</b><b class="k39">_</b><b class="k9">s</b><b class="k40">i</b><b class="k41">9</b><b class="k9">1</b><b class="k12">x</b><b class="k38">_</b><b class="k40">le</b><b class="k38">d</b><b class="k12">_</b><b class="k14">c</b><b class="k40">o</b><b class="k25">n</b><b class="k46">f</b><b class="k42">i</b><b class="k33">g</b><b class="k23">.</b><b class="k41">h</b></div>
<svg style="left:84px;top:432.5px" width="6" height="10" viewBox="0 0 6 10"><path d="M1 1 5 5 1 9" stroke="#a6a6a6" stroke-width="1.500" fill="none"/></svg>
<svg style="left:100px;top:428px" width="16" height="17" viewBox="0 0 16 17"><path d="M2.500 1.500h6.500l3.500 3.500v9.500h-10z" fill="#eef4fc" stroke="#8a6a28"/><path d="M9 1.500v3.500h3.500" fill="#f3dfa4" stroke="#b8964a" stroke-width=".8"/>
<rect x="4" y="11" width="1.500" height="1.600" fill="#1c3f78"/><path d="M6.800 5.500v7.100M6.800 9.800q0-1.600 1.800-1.600t1.800 1.600v2.800" stroke="#1c3f78" stroke-width="1.500" fill="none"/></svg>
<div class="t sg" style="left:119.25px;top:426.70px;width:349px;overflow:hidden"><b class="k9">s</b><b class="k38">l</b><b class="k39">_</b><b class="k9">s</b><b class="k40">i</b><b class="k41">9</b><b class="k9">1</b><b class="k12">x</b><b class="k39">_</b><b class="k41">s</b><b class="k25">t</b><b class="k9">a</b><b class="k43">c</b><b class="k12">k</b><b class="k39">_</b><b class="k9">s</b><b class="k14">i</b><b class="k9">z</b><b class="k28">e</b><b class="k12">_</b><b class="k14">c</b><b class="k40">o</b><b class="k25">n</b><b class="k46">f</b><b class="k42">i</b><b class="k33">g</b><b class="k23">.</b><b class="k41">h</b></div>
<svg style="left:84px;top:455.5px" width="6" height="10" viewBox="0 0 6 10"><path d="M1 1 5 5 1 9" stroke="#a6a6a6" stroke-width="1.500" fill="none"/></svg>
<svg style="left:100px;top:451px" width="16" height="17" viewBox="0 0 16 17"><path d="M2.500 1.500h6.500l3.500 3.500v9.500h-10z" fill="#eef4fc" stroke="#8a6a28"/><path d="M9 1.500v3.500h3.500" fill="#f3dfa4" stroke="#b8964a" stroke-width=".8"/>
<rect x="4" y="11" width="1.500" height="1.600" fill="#1c3f78"/><path d="M6.800 5.500v7.100M6.800 9.800q0-1.600 1.800-1.600t1.800 1.600v2.800" stroke="#1c3f78" stroke-width="1.500" fill="none"/></svg>
<div class="t sg" style="left:119.25px;top:449.70px;width:349px;overflow:hidden"><b class="k9">s</b><b class="k38">l</b><b class="k39">_</b><b class="k9">s</b><b class="k42">i</b><b class="k38">o_</b><b class="k42">b</b><b class="k40">o</b><b class="k15">a</b><b class="k44">r</b><b class="k33">d</b><b class="k23">.</b><b class="k41">h</b></div>
<svg style="left:84px;top:478.5px" width="6" height="10" viewBox="0 0 6 10"><path d="M1 1 5 5 1 9" stroke="#a6a6a6" stroke-width="1.500" fill="none"/></svg>
<svg style="left:100px;top:474px" width="16" height="17" viewBox="0 0 16 17"><path d="M2.500 1.500h6.500l3.500 3.500v9.500h-10z" fill="#eef4fc" stroke="#8a6a28"/><path d="M9 1.500v3.500h3.500" fill="#f3dfa4" stroke="#b8964a" stroke-width=".8"/>
<rect x="4" y="11" width="1.500" height="1.600" fill="#1c3f78"/><path d="M6.800 5.500v7.100M6.800 9.800q0-1.600 1.800-1.600t1.800 1.600v2.800" stroke="#1c3f78" stroke-width="1.500" fill="none"/></svg>
<div class="t sg" style="left:119.25px;top:472.70px;width:349px;overflow:hidden"><b class="k9">s</b><b class="k38">l</b><b class="k39">_</b><b class="k9">s</b><b class="k40">l</b><b class="k41">e</b><b class="k40">e</b><b class="k46">pt</b><b class="k6">i</b><b class="k14">m</b><b class="k15">e</b><b class="k51">r</b><b class="k12">_</b><b class="k14">c</b><b class="k40">o</b><b class="k25">n</b><b class="k46">f</b><b class="k42">i</b><b class="k33">g</b><b class="k23">.</b><b class="k41">h</b></div>
<svg style="left:84px;top:501.5px" width="6" height="10" viewBox="0 0 6 10"><path d="M1 1 5 5 1 9" stroke="#a6a6a6" stroke-width="1.500" fill="none"/></svg>
<svg style="left:100px;top:497px" width="16" height="17" viewBox="0 0 16 17"><path d="M2.500 1.500h6.500l3.500 3.500v9.500h-10z" fill="#eef4fc" stroke="#8a6a28"/><path d="M9 1.500v3.500h3.500" fill="#f3dfa4" stroke="#b8964a" stroke-width=".8"/>
<rect x="4" y="11" width="1.500" height="1.600" fill="#1c3f78"/><path d="M6.800 5.500v7.100M6.800 9.800q0-1.600 1.800-1.600t1.800 1.600v2.800" stroke="#1c3f78" stroke-width="1.500" fill="none"/></svg>
<div class="t sg" style="left:119.25px;top:495.70px;width:349px;overflow:hidden"><b class="k9">s</b><b class="k38">l</b><b class="k39">_</b><b class="k4">sy</b><b class="k23">s</b><b class="k18">r</b><b class="k40">t</b><b class="k12">c</b><b class="k38">_</b><b class="k42">b</b><b class="k40">o</b><b class="k15">a</b><b class="k44">r</b><b class="k33">d</b><b class="k23">.</b><b class="k41">h</b></div>
<svg style="left:64px;top:524.5px" width="6" height="10" viewBox="0 0 6 10"><path d="M1 1 5 5 1 9" stroke="#a6a6a6" stroke-width="1.500" fill="none"/></svg>
<svg style="left:78px;top:521px" width="17" height="16" viewBox="0 0 17 16"><path d="M1.500 13V4.200q0-.7.700-.7h3.300l1.500 1.500h5.500q.7 0 .7.700V8" fill="#f3c766" stroke="#bb842c"/>
<path d="M1.600 13.500 4 8h11.600l-2.600 5.500z" fill="#fdecb4" stroke="#bb842c" stroke-linejoin="round"/></svg>
<div class="t sg" style="left:100.33px;top:518.70px;width:369px;overflow:hidden"><b class="k40">g</b><b class="k9">e</b><b class="k43">c</b><b class="k14">k</b><b class="k38">o</b><b class="k39">_</b><b class="k9">s</b><b class="k14">d</b><b class="k12">k</b><b class="k28">_</b><b class="k23">4.4.</b><b class="k41">2</b></div>
<svg style="left:62px;top:549px" width="10" height="6" viewBox="0 0 10 6"><path d="M1 1 5 5 9 1" stroke="#404040" stroke-width="1.500" fill="none"/></svg>
<svg style="left:78px;top:544px" width="17" height="16" viewBox="0 0 17 16"><path d="M1.500 13V4.200q0-.7.700-.7h3.300l1.500 1.500h5.500q.7 0 .7.700V8" fill="#f3c766" stroke="#bb842c"/>
<path d="M1.600 13.500 4 8h11.600l-2.600 5.500z" fill="#fdecb4" stroke="#bb842c" stroke-linejoin="round"/></svg>
<div class="t sg" style="left:99.17px;top:541.70px;width:369px;overflow:hidden"><b class="k23">G</b><b class="k41">N</b><b class="k43">U</b><b class="k8"> </b><b class="k20">A</b><b class="k29">R</b><b class="k40">M</b><b class="k41"> </b><b class="k9">v</b><b class="k41">1</b><b class="k23">2.2.</b><b class="k33">1</b><b class="k18"> -</b><b class="k45"> </b><b class="k8">D</b><b class="k25">ef</b><b class="k41">a</b><b class="k40">u</b><b class="k46">l</b><b class="k47">t</b></div>
<svg style="left:84px;top:570.5px" width="6" height="10" viewBox="0 0 6 10"><path d="M1 1 5 5 1 9" stroke="#a6a6a6" stroke-width="1.500" fill="none"/></svg>
<svg style="left:99px;top:567px" width="17" height="16" viewBox="0 0 17 16"><path d="M1.500 13V4.200q0-.7.700-.7h3.300l1.500 1.500h5.500q.7 0 .7.700V8" fill="#f3c766" stroke="#bb842c"/>
<path d="M1.600 13.500 4 8h11.600l-2.600 5.500z" fill="#fdecb4" stroke="#bb842c" stroke-linejoin="round"/></svg>
<div class="t sg" style="left:119.83px;top:564.70px;width:349px;overflow:hidden"><b class="k41">a</b><b class="k25">u</b><b class="k46">t</b><b class="k42">o</b><b class="k40">g</b><b class="k41">en</b></div>
<svg style="left:84px;top:593.5px" width="6" height="10" viewBox="0 0 6 10"><path d="M1 1 5 5 1 9" stroke="#a6a6a6" stroke-width="1.500" fill="none"/></svg>
<svg style="left:99px;top:590px" width="17" height="16" viewBox="0 0 17 16"><path d="M1.500 13V4.200q0-.7.700-.7h3.300l1.500 1.500h5.500q.7 0 .7.700V8" fill="#f3c766" stroke="#bb842c"/>
<path d="M1.600 13.500 4 8h11.600l-2.600 5.500z" fill="#fdecb4" stroke="#bb842c" stroke-linejoin="round"/></svg>
<div class="t sg" style="left:120.33px;top:587.70px;width:349px;overflow:hidden"><b class="k40">g</b><b class="k9">e</b><b class="k43">c</b><b class="k14">k</b><b class="k38">o</b><b class="k39">_</b><b class="k9">s</b><b class="k14">d</b><b class="k12">k</b><b class="k28">_</b><b class="k23">4.4.</b><b class="k41">2</b></div>
<svg style="left:84px;top:616.5px" width="6" height="10" viewBox="0 0 6 10"><path d="M1 1 5 5 1 9" stroke="#a6a6a6" stroke-width="1.500" fill="none"/></svg>
<svg style="left:99px;top:613px" width="17" height="16" viewBox="0 0 17 16"><path d="M1.500 13V4.200q0-.7.700-.7h3.300l1.500 1.500h5.500q.7 0 .7.700V8" fill="#f3c766" stroke="#bb842c"/>
<path d="M1.600 13.500 4 8h11.600l-2.600 5.500z" fill="#fdecb4" stroke="#bb842c" stroke-linejoin="round"/></svg>
<div class="t sg" style="left:120.08px;top:610.70px;width:349px;overflow:hidden"><b class="k18">w</b><b class="k9">i</b><b class="k20">s</b><b class="k9">e</b><b class="k14">c</b><b class="k40">o</b><b class="k41">nn</b><b class="k9">e</b><b class="k40">c</b><b class="k25">t</b><b class="k28">3</b><b class="k39">_</b><b class="k9">s</b><b class="k14">d</b><b class="k12">k</b><b class="k28">_</b><b class="k23">3.2.</b><b class="k41">0</b></div>
<svg style="left:84px;top:639.5px" width="6" height="10" viewBox="0 0 6 10"><path d="M1 1 5 5 1 9" stroke="#a6a6a6" stroke-width="1.500" fill="none"/></svg>
<svg style="left:100px;top:635px" width="16" height="17" viewBox="0 0 16 17"><path d="M1.500 1.500h6.500l3.500 3.500v9.500h-10z" fill="#fbfcfe" stroke="#a08a4a"/><path d="M8 1.500v3.500h3.500" fill="#f3dfa4" stroke="#b8964a" stroke-width=".8"/>
<path d="M3.500 4.500h3M3.500 6.500h5" stroke="#6b88b8" stroke-width="1"/>
<text x="1.800" y="13.500" font-family="Liberation Sans" font-size="7" font-weight="bold" fill="#1c3f78" letter-spacing="-.2">010</text></svg>
<div class="t sg" style="left:119.83px;top:633.70px;width:349px;overflow:hidden"><b class="k40">a</b><b class="k42">p</b><b class="k33">p.</b><b class="k25">o</b><b class="k18"> -</b><b class="k44"> </b><b class="k25">[</b><b class="k15">a</b><b class="k25">r</b><b class="k52">m</b><b class="k53">/</b><b class="k40">l</b><b class="k25">e</b><b class="k47">]</b></div>
<svg style="left:84px;top:662.5px" width="6" height="10" viewBox="0 0 6 10"><path d="M1 1 5 5 1 9" stroke="#a6a6a6" stroke-width="1.500" fill="none"/></svg>
<svg style="left:100px;top:658px" width="16" height="17" viewBox="0 0 16 17"><path d="M1.500 1.500h6.500l3.500 3.500v9.500h-10z" fill="#fbfcfe" stroke="#a08a4a"/><path d="M8 1.500v3.500h3.500" fill="#f3dfa4" stroke="#b8964a" stroke-width=".8"/>
<path d="M3.500 4.500h3M3.500 6.500h5" stroke="#6b88b8" stroke-width="1"/>
<text x="1.800" y="13.500" font-family="Liberation Sans" font-size="7" font-weight="bold" fill="#1c3f78" letter-spacing="-.2">010</text></svg>
<div class="t sg" style="left:120.33px;top:656.70px;width:349px;overflow:hidden"><b class="k42">bl</b><b class="k40">i</b><b class="k9">n</b><b class="k43">k</b><b class="k38">y</b><b class="k33">.</b><b class="k25">o</b><b class="k18"> -</b><b class="k44"> </b><b class="k25">[</b><b class="k15">a</b><b class="k25">r</b><b class="k52">m</b><b class="k53">/</b><b class="k40">l</b><b class="k25">e</b><b class="k47">]</b></div>
<svg style="left:84px;top:685.5px" width="6" height="10" viewBox="0 0 6 10"><path d="M1 1 5 5 1 9" stroke="#a6a6a6" stroke-width="1.500" fill="none"/></svg>
<svg style="left:100px;top:681px" width="16" height="17" viewBox="0 0 16 17"><path d="M1.500 1.500h6.500l3.500 3.500v9.500h-10z" fill="#fbfcfe" stroke="#a08a4a"/><path d="M8 1.500v3.500h3.500" fill="#f3dfa4" stroke="#b8964a" stroke-width=".8"/>
<path d="M3.500 4.500h3M3.500 6.500h5" stroke="#6b88b8" stroke-width="1"/>
<text x="1.800" y="13.500" font-family="Liberation Sans" font-size="7" font-weight="bold" fill="#1c3f78" letter-spacing="-.2">010</text></svg>
<div class="t sg" style="left:120.25px;top:679.70px;width:349px;overflow:hidden"><b class="k14">m</b><b class="k40">ai</b><b class="k23">n</b><b class="k33">.</b><b class="k25">o</b><b class="k18"> -</b><b class="k44"> </b><b class="k25">[</b><b class="k15">a</b><b class="k25">r</b><b class="k52">m</b><b class="k53">/</b><b class="k40">l</b><b class="k25">e</b><b class="k47">]</b></div>
<svg style="left:84px;top:708.5px" width="6" height="10" viewBox="0 0 6 10"><path d="M1 1 5 5 1 9" stroke="#a6a6a6" stroke-width="1.500" fill="none"/></svg>
<svg style="left:100px;top:704px" width="16" height="16" viewBox="0 0 16 16"><defs><linearGradient id="eg" x1="0" x2="0" y1="0" y2="1"><stop offset="0" stop-color="#a9bce6"/><stop offset="1" stop-color="#6383c0"/></linearGradient></defs><circle cx="7" cy="8" r="6.500" fill="url(#eg)" stroke="#6a86c0"/><path d="M4.500 3.200 11.300 8 4.500 12.800z" fill="#fff"/></svg>
<div class="t sg" style="left:119.25px;top:702.70px;width:349px;overflow:hidden"><b class="k9">s</b><b class="k38">l</b><b class="k39">_</b><b class="k9">s</b><b class="k40">i</b><b class="k41">9</b><b class="k9">1</b><b class="k12">x</b><b class="k38">_</b><b class="k42">bl</b><b class="k40">i</b><b class="k9">n</b><b class="k43">k</b><b class="k12">y</b><b class="k23">_</b><b class="k25">t</b><b class="k20">e</b><b class="k41">s</b><b class="k15">t</b><b class="k23">.</b><b class="k9">a</b><b class="k40">x</b><b class="k44">f</b><b class="k18"> -</b><b class="k44"> </b><b class="k25">[</b><b class="k15">a</b><b class="k25">r</b><b class="k52">m</b><b class="k53">/</b><b class="k40">l</b><b class="k25">e</b><b class="k47">]</b></div>
<svg style="left:84px;top:731.5px" width="6" height="10" viewBox="0 0 6 10"><path d="M1 1 5 5 1 9" stroke="#a6a6a6" stroke-width="1.500" fill="none"/></svg>
<svg style="left:99px;top:727px" width="16" height="17.0" viewBox="0 0 16 17"><g stroke="#2a4a80" stroke-width="1.100" fill="none" stroke-linecap="round">
<path d="M4.300 1 4.700 3.500M8.700 1.800 7.800 4.300M.3 5 3.500 5.400M1.200 9.700 4.400 8.900M4.600 11.300 4.300 13.200 5.200 14.800M8.300 12.800 8.800 14.500 10 15.800M9.800 5.600 12 4.600 14 5.200M11.300 9 13.500 9 15 10.200"/></g>
<ellipse cx="7.600" cy="8.200" rx="2.900" ry="4.200" transform="rotate(-35 7.600 8.200)" fill="#bccdf0" stroke="#2a4a80" stroke-width="1"/>
<path d="M6.300 6.500 9.500 10.500" stroke="#8aa4d8" stroke-width=".9"/>
<circle cx="4.700" cy="4.600" r="1.300" fill="#d8e2f6" stroke="#2a4a80" stroke-width=".9"/></svg>
<div class="t sg" style="left:119.25px;top:725.70px;width:349px;overflow:hidden"><b class="k9">s</b><b class="k38">l</b><b class="k39">_</b><b class="k9">s</b><b class="k40">i</b><b class="k41">9</b><b class="k9">1</b><b class="k12">x</b><b class="k38">_</b><b class="k42">bl</b><b class="k40">i</b><b class="k9">n</b><b class="k43">k</b><b class="k12">y</b><b class="k23">_</b><b class="k25">t</b><b class="k20">e</b><b class="k41">s</b><b class="k15">t</b><b class="k23">.</b><b class="k9">a</b><b class="k40">x</b><b class="k44">f</b><b class="k18"> -</b><b class="k44"> </b><b class="k25">[</b><b class="k15">a</b><b class="k25">r</b><b class="k52">m</b><b class="k53">/</b><b class="k40">l</b><b class="k25">e</b><b class="k47">]</b></div>
<svg style="left:84px;top:754.5px" width="6" height="10" viewBox="0 0 6 10"><path d="M1 1 5 5 1 9" stroke="#a6a6a6" stroke-width="1.500" fill="none"/></svg>
<svg style="left:100px;top:750px" width="16" height="16" viewBox="0 0 16 16"><defs><linearGradient id="eg" x1="0" x2="0" y1="0" y2="1"><stop offset="0" stop-color="#a9bce6"/><stop offset="1" stop-color="#6383c0"/></linearGradient></defs><circle cx="7" cy="8" r="6.500" fill="url(#eg)" stroke="#6a86c0"/><path d="M4.500 3.200 11.300 8 4.500 12.800z" fill="#fff"/></svg>
<div class="t sg" style="left:119.25px;top:748.70px;width:349px;overflow:hidden"><b class="k9">s</b><b class="k38">l</b><b class="k39">_</b><b class="k9">s</b><b class="k40">i</b><b class="k41">9</b><b class="k9">1</b><b class="k12">x</b><b class="k38">_</b><b class="k42">bl</b><b class="k40">i</b><b class="k9">n</b><b class="k43">k</b><b class="k12">y</b><b class="k23">_</b><b class="k25">t</b><b class="k20">e</b><b class="k41">s</b><b class="k15">t</b><b class="k33">.</b><b class="k42">b</b><b class="k40">i</b><b class="k33">n</b><b class="k18"> -</b><b class="k44"> </b><b class="k25">[</b><b class="k41">u</b><b class="k9">nk</b><b class="k40">n</b><b class="k18">o</b><b class="k8">w</b><b class="k46">n</b><b class="k53">/</b><b class="k40">l</b><b class="k25">e</b><b class="k47">]</b></div>
<svg style="left:84px;top:777.5px" width="6" height="10" viewBox="0 0 6 10"><path d="M1 1 5 5 1 9" stroke="#a6a6a6" stroke-width="1.500" fill="none"/></svg>
<svg style="left:100px;top:773px" width="16" height="16" viewBox="0 0 16 16"><defs><linearGradient id="eg" x1="0" x2="0" y1="0" y2="1"><stop offset="0" stop-color="#a9bce6"/><stop offset="1" stop-color="#6383c0"/></linearGradient></defs><circle cx="7" cy="8" r="6.500" fill="url(#eg)" stroke="#6a86c0"/><path d="M4.500 3.200 11.300 8 4.500 12.800z" fill="#fff"/></svg>
<div class="t sg" style="left:119.25px;top:771.70px;width:349px;overflow:hidden"><b class="k9">s</b><b class="k38">l</b><b class="k39">_</b><b class="k9">s</b><b class="k40">i</b><b class="k41">9</b><b class="k9">1</b><b class="k12">x</b><b class="k38">_</b><b class="k42">bl</b><b class="k40">i</b><b class="k9">n</b><b class="k43">k</b><b class="k12">y</b><b class="k23">_</b><b class="k25">t</b><b class="k20">e</b><b class="k41">s</b><b class="k15">t</b><b class="k23">.</b><b class="k41">h</b><b class="k9">e</b><b class="k41">x</b><b class="k18"> -</b><b class="k44"> </b><b class="k25">[</b><b class="k41">u</b><b class="k9">nk</b><b class="k40">n</b><b class="k18">o</b><b class="k8">w</b><b class="k46">n</b><b class="k53">/</b><b class="k40">l</b><b class="k25">e</b><b class="k47">]</b></div>
<svg style="left:84px;top:800.5px" width="6" height="10" viewBox="0 0 6 10"><path d="M1 1 5 5 1 9" stroke="#a6a6a6" stroke-width="1.500" fill="none"/></svg>
<svg style="left:99px;top:796px" width="16" height="17.0" viewBox="0 0 16 17"><g stroke="#2a4a80" stroke-width="1.100" fill="none" stroke-linecap="round">
<path d="M4.300 1 4.700 3.500M8.700 1.800 7.800 4.300M.3 5 3.500 5.400M1.200 9.700 4.400 8.900M4.600 11.300 4.300 13.200 5.200 14.800M8.300 12.800 8.800 14.500 10 15.800M9.800 5.600 12 4.600 14 5.200M11.300 9 13.500 9 15 10.200"/></g>
<ellipse cx="7.600" cy="8.200" rx="2.900" ry="4.200" transform="rotate(-35 7.600 8.200)" fill="#bccdf0" stroke="#2a4a80" stroke-width="1"/>
<path d="M6.300 6.500 9.500 10.500" stroke="#8aa4d8" stroke-width=".9"/>
<circle cx="4.700" cy="4.600" r="1.300" fill="#d8e2f6" stroke="#2a4a80" stroke-width=".9"/></svg>
<div class="t sg" style="left:119.25px;top:794.70px;width:349px;overflow:hidden"><b class="k9">s</b><b class="k38">l</b><b class="k39">_</b><b class="k9">s</b><b class="k40">i</b><b class="k41">9</b><b class="k9">1</b><b class="k12">x</b><b class="k38">_</b><b class="k42">bl</b><b class="k40">i</b><b class="k9">n</b><b class="k43">k</b><b class="k12">y</b><b class="k23">_</b><b class="k25">t</b><b class="k20">e</b><b class="k41">s</b><b class="k15">t</b><b class="k3">.</b><b class="k44">r</b><b class="k9">p</b><b class="k38">s</b><b class="k18"> -</b><b class="k44"> </b><b class="k25">[</b><b class="k41">u</b><b class="k9">nk</b><b class="k40">n</b><b class="k18">o</b><b class="k8">w</b><b class="k46">n</b><b class="k53">/</b><b class="k40">l</b><b class="k25">e</b><b class="k47">]</b></div>
<svg style="left:84px;top:823.5px" width="6" height="10" viewBox="0 0 6 10"><path d="M1 1 5 5 1 9" stroke="#a6a6a6" stroke-width="1.500" fill="none"/></svg>
<svg style="left:100px;top:819px" width="16" height="16" viewBox="0 0 16 16"><defs><linearGradient id="eg" x1="0" x2="0" y1="0" y2="1"><stop offset="0" stop-color="#a9bce6"/><stop offset="1" stop-color="#6383c0"/></linearGradient></defs><circle cx="7" cy="8" r="6.500" fill="url(#eg)" stroke="#6a86c0"/><path d="M4.500 3.200 11.300 8 4.500 12.800z" fill="#fff"/></svg>
<div class="t sg" style="left:119.25px;top:817.70px;width:349px;overflow:hidden"><b class="k9">s</b><b class="k38">l</b><b class="k39">_</b><b class="k9">s</b><b class="k40">i</b><b class="k41">9</b><b class="k9">1</b><b class="k12">x</b><b class="k38">_</b><b class="k42">bl</b><b class="k40">i</b><b class="k9">n</b><b class="k43">k</b><b class="k12">y</b><b class="k23">_</b><b class="k25">t</b><b class="k20">e</b><b class="k41">s</b><b class="k15">t</b><b class="k28">.</b><b class="k20">s</b><b class="k41">3</b><b class="k33">7</b><b class="k18"> -</b><b class="k44"> </b><b class="k25">[</b><b class="k41">u</b><b class="k9">nk</b><b class="k40">n</b><b class="k18">o</b><b class="k8">w</b><b class="k46">n</b><b class="k53">/</b><b class="k40">l</b><b class="k25">e</b><b class="k47">]</b></div>
<svg style="left:100px;top:842px" width="16" height="17" viewBox="0 0 16 17"><path d="M2.500 1.500h6.500l3.500 3.500v9.500h-10z" fill="#fbfcfe" stroke="#8b97a8"/><path d="M9 1.500v3.500h3.500" fill="#e8ecf2" stroke="#8b97a8" stroke-width=".8"/>
<path d="M4.500 5.500h3M4.500 7.500h6M4.500 9.500h6M4.500 11.500h6" stroke="#6b88b8" stroke-width="1"/></svg>
<div class="t sg" style="left:119.83px;top:840.70px;width:349px;overflow:hidden"><b class="k40">a</b><b class="k42">p</b><b class="k33">p.</b><b class="k42">d</b></div>
<svg style="left:100px;top:865px" width="16" height="17" viewBox="0 0 16 17"><path d="M2.500 1.500h6.500l3.500 3.500v9.500h-10z" fill="#fbfcfe" stroke="#8b97a8"/><path d="M9 1.500v3.500h3.500" fill="#e8ecf2" stroke="#8b97a8" stroke-width=".8"/>
<path d="M4.500 5.500h3M4.500 7.500h6M4.500 9.500h6M4.500 11.500h6" stroke="#6b88b8" stroke-width="1"/></svg>
<div class="t sg" style="left:120.33px;top:863.70px;width:349px;overflow:hidden"><b class="k42">bl</b><b class="k40">i</b><b class="k9">n</b><b class="k43">k</b><b class="k38">y</b><b class="k33">.</b><b class="k42">d</b></div>
<svg style="left:100px;top:888px" width="16" height="17" viewBox="0 0 16 17"><path d="M2.500 1.500h6.500l3.500 3.500v9.500h-10z" fill="#fbfcfe" stroke="#8b97a8"/><path d="M9 1.500v3.500h3.500" fill="#e8ecf2" stroke="#8b97a8" stroke-width=".8"/>
<path d="M4.500 5.500h3M4.500 7.500h6M4.500 9.500h6M4.500 11.500h6" stroke="#6b88b8" stroke-width="1"/></svg>
<div class="t sg" style="left:120.25px;top:886.70px;width:349px;overflow:hidden"><b class="k14">m</b><b class="k40">ai</b><b class="k23">n</b><b class="k33">.</b><b class="k42">d</b></div>
<svg style="left:100px;top:911px" width="17" height="18" viewBox="0 0 17 18"><path d="M.5 1.500h6.500l3.500 3.500v9.500h-10z" fill="#fbfcfe" stroke="#8a8a8a"/><path d="M7 1.500v3.500h3.500" fill="#f3dfa4" stroke="#b8964a" stroke-width=".8"/>
<circle cx="10.500" cy="12" r="4" fill="#fff" stroke="#2f9a5a" stroke-width="1.100"/><circle cx="10.500" cy="12" r="2" fill="none" stroke="#2f9a5a" stroke-width="1"/><circle cx="10.500" cy="12" r=".6" fill="#2f9a5a"/></svg>
<div class="t sg" style="left:120.25px;top:909.70px;width:349px;overflow:hidden"><b class="k14">m</b><b class="k9">ak</b><b class="k25">e</b><b class="k46">f</b><b class="k42">i</b><b class="k40">l</b><b class="k41">e</b></div>
<svg style="left:100px;top:934px" width="17" height="18" viewBox="0 0 17 18"><path d="M.5 1.500h6.500l3.500 3.500v9.500h-10z" fill="#fbfcfe" stroke="#8a8a8a"/><path d="M7 1.500v3.500h3.500" fill="#f3dfa4" stroke="#b8964a" stroke-width=".8"/>
<circle cx="10.500" cy="12" r="4" fill="#fff" stroke="#2f9a5a" stroke-width="1.100"/><circle cx="10.500" cy="12" r="2" fill="none" stroke="#2f9a5a" stroke-width="1"/><circle cx="10.500" cy="12" r=".6" fill="#2f9a5a"/></svg>
<div class="t sg" style="left:120.33px;top:932.70px;width:349px;overflow:hidden"><b class="k42">ob</b><b class="k40">j</b><b class="k9">e</b><b class="k40">c</b><b class="k41">t</b><b class="k28">s</b><b class="k41">.</b><b class="k45">m</b><b class="k43">k</b></div>
<div class="a" style="left:469px;top:80px;width:21px;height:874px;background:#f0f0f0"></div>
<svg style="left:474px;top:87px" width="10" height="7" viewBox="0 0 10 7"><path d="M.7 6 5 1.700 9.300 6" stroke="#404040" stroke-width="1.900" fill="none"/></svg>
<svg style="left:474px;top:939px" width="10" height="7" viewBox="0 0 10 7"><path d="M.7 1 5 5.300 9.300 1" stroke="#404040" stroke-width="1.900" fill="none"/></svg>
<div class="a" style="left:36px;top:954px;width:454px;height:20px;background:#f0f0f0"></div>
<div class="a" style="left:57px;top:954px;width:94px;height:19px;background:#cdcdcd"></div>
<svg style="left:42px;top:958px" width="7" height="10" viewBox="0 0 7 10"><path d="M5.300 .7 1 5 5.300 9.300" stroke="#404040" stroke-width="1.900" fill="none"/></svg>
<svg style="left:455px;top:958px" width="7" height="10" viewBox="0 0 7 10"><path d="M.7 .7 5 5 .7 9.300" stroke="#404040" stroke-width="1.900" fill="none"/></svg>
<svg style="left:1px;top:981px" width="18" height="16" viewBox="0 0 18 16"><path d="M2 13V4.500h2V2.800q0-.8.800-.8h4.400q.8 0 .8.800V4.500h2V9H5.500z" fill="#fbe19a"/>
<path d="M4.500 4.500V3q0-.5.500-.5h4q.5 0 .5.500V4.500" fill="#fdf3d8" stroke="#e0b468" stroke-width=".9"/>
<path d="M1 4.800h2.800" stroke="#8a7088" stroke-width="1"/>
<path d="M2 4.800V12q0 1.500 1.300 1.500" fill="none" stroke="#3a4aa8" stroke-width="1.100"/>
<path d="M5.800 8.500H17l-4.200 5.200H2.800z" fill="#b4defc" stroke="#3a4aa8" stroke-width="1.100" stroke-linejoin="round"/>
<text x="10.800" y="7.400" font-family="Liberation Sans" font-size="8.500" font-weight="bold" fill="#1a5a8a" stroke="#fff" stroke-width="1.600" paint-order="stroke">C</text></svg>
<div class="t sg" style="left:21.07px;top:978.63px;font-size:15.5px;"><b class="k11">s</b><b class="k51">l</b><b class="k54">_</b><b class="k11">s</b><b class="k15">i</b><b class="k11">9</b><b class="k26">1</b><b class="k55">x</b><b class="k30">_</b><b class="k44">b</b><b class="k5">l</b><b class="k15">i</b><b class="k26">n</b><b class="k38">k</b><b class="k55">y</b><b class="k56">_</b><b class="k2">t</b><b class="k36">e</b><b class="k29">s</b><b class="k6">t</b></div>
<svg style="left:1562px;top:983px" width="2" height="13" viewBox="0 0 2 13"><rect x="0" y="0.0" width="1.300" height="1.400" fill="#a39678"/><rect x="0" y="3.6" width="1.300" height="1.400" fill="#a39678"/><rect x="0" y="7.2" width="1.300" height="1.400" fill="#a39678"/><rect x="0" y="10.8" width="1.300" height="1.400" fill="#a39678"/></svg>
<svg style="left:1894px;top:982px" width="16" height="15" viewBox="0 0 16 15"><rect x=".5" y=".5" width="9" height="6" fill="#dfeee0" stroke="#8ab08a"/><rect x=".5" y=".5" width="9" height="1.500" fill="#8ab890"/><rect x="2.500" y="2.500" width="9" height="6" fill="#dfeee0" stroke="#8ab08a"/><rect x="2.500" y="2.500" width="9" height="1.500" fill="#7ab080"/><rect x="4.500" y="4.500" width="9" height="6.500" fill="#e6f2e6" stroke="#7aa87a"/><rect x="4.500" y="4.500" width="9" height="1.500" fill="#6aa870"/><circle cx="11.500" cy="11" r="3.800" fill="#e8505a" stroke="#c02a35" stroke-width=".8"/><path d="M9.800 9.300l3.400 3.400M13.200 9.300l-3.400 3.400" stroke="#fff" stroke-width="1.200"/></svg>
<div class="a" style="left:497px;top:53px;width:1418px;height:648px;background:#fff;border:1px solid #a0a0a0;border-radius:3px 3px 0 0"></div>
<div class="a" style="left:498px;top:54px;width:1416px;height:23px;background:#ececec"></div>
<div class="a" style="left:498px;top:77px;width:1416px;height:1px;background:#a0a0a0"></div>
<div class="a" style="left:1912px;top:78px;width:2px;height:620px;background:#ececec"></div>
<div class="a" style="left:498px;top:78px;width:1px;height:620px;background:#ececec"></div>
<div class="a" style="left:700px;top:56px;width:1px;height:21px;background:#a0a0a0"></div>
<div class="a" style="left:826px;top:54px;width:166px;height:24px;background:#fafafa;border:1px solid #a0a0a0;border-bottom:none;border-radius:3px 3px 0 0"></div>
<svg style="left:501px;top:59px" width="16" height="13" viewBox="0 0 16 13"><g fill="#1a7fd6"><rect x="4.500" y="0" width="7" height="6" rx="1"/><rect x="0" y="6.500" width="7.500" height="6.500" rx="1"/><rect x="8.500" y="6.500" width="7.500" height="6.500" rx="1"/></g></svg>
<div class="t sg" style="left:520.12px;top:56.33px;font-size:15.5px;"><b class="k3">s</b><b class="k56">l</b><b class="k57">_</b><b class="k3">s</b><b class="k2">i</b><b class="k3">9</b><b class="k11">1</b><b class="k58">x</b><b class="k48">_</b><b class="k5">b</b><b class="k1">l</b><b class="k2">i</b><b class="k11">n</b><b class="k23">k</b><b class="k58">y</b><b class="k0">_</b><b class="k13">t</b><b class="k30">e</b><b class="k22">s</b><b class="k21">t</b><b class="k35">.</b><b class="k3">s</b><b class="k8">l</b><b class="k19">c</b><b class="k18">p</b></div>
<svg style="left:706px;top:59px" width="13" height="13" viewBox="0 0 13 13"><rect x=".5" y=".5" width="12" height="12" fill="#fff" stroke="#7f7a5a"/><rect x=".5" y=".5" width="12" height="2.500" fill="#5a7fc0"/></svg>
<div class="t sg" style="left:723.92px;top:56.33px;font-size:15.5px;"><b class="k9">r</b><b class="k3">e</b><b class="k8">a</b><b class="k25">d</b><b class="k33">m</b><b class="k0">e</b><b class="k3">.</b><b class="k25">m</b><b class="k18">d</b></div>
<svg style="left:831px;top:57px" width="15" height="16" viewBox="0 0 16 17"><path d="M2.500 1.500h6.500l3.500 3.500v9.500h-10z" fill="#eef4fc" stroke="#8a6a28"/><path d="M9 1.500v3.500h3.500" fill="#f3dfa4" stroke="#b8964a" stroke-width=".8"/>
<rect x="4" y="11" width="1.500" height="1.600" fill="#1c3f78"/><path d="M6.800 5.500v7.100M6.800 9.800q0-1.600 1.800-1.600t1.800 1.600v2.800" stroke="#1c3f78" stroke-width="1.500" fill="none"/></svg>
<div class="t sg" style="left:848.87px;top:56.33px;font-size:15.5px;"><b class="k39">R</b><b class="k27">T</b><b class="k59">E</b><b class="k60">_</b><b class="k10">D</b><b class="k23">e</b><b class="k15">vi</b><b class="k23">c</b><b class="k58">e_</b><b class="k11">91</b><b class="k56">7.</b><b class="k11">h</b></div>
<svg style="left:976.0px;top:62.2px" width="9.0" height="9.0" viewBox="0 0 9.0 9.0"><path d="M0 0 9.0 9.0M9.0 0 0 9.0" stroke="#222" stroke-width="1.1"/></svg>
<svg style="left:1872px;top:59px" width="10" height="4" viewBox="0 0 10 4"><rect x=".5" y=".5" width="9" height="3" fill="#fff" stroke="#000" stroke-width="1"/></svg>
<svg style="left:1895px;top:59px" width="10" height="10" viewBox="0 0 10 10"><rect x=".5" y=".5" width="9" height="9" fill="#fff" stroke="#000" stroke-width="1"/><path d="M1 2.500h8" stroke="#333" stroke-width="1"/></svg>
<div class="a" style="left:583px;top:240px;width:1296px;height:20px;background:#e8f2fe"></div>
<div class="a" style="left:1280px;top:79px;width:1px;height:598px;background:#b8b8b8"></div>
<div class="t mono" style="left:530px;top:82px;color:#787878">10</div>
<div class="t mono" style="left:560px;top:82px"><span class="c"> * 1. The origin of this software must not be </span><span class="c sq">misrepresented</span><span class="c">; you must not</span></div>
<div class="t mono" style="left:560px;top:102px"><span class="c">      claim that you wrote the original software. If you use this software in</span></div>
<div class="t mono" style="left:560px;top:122px"><span class="c">      a product, an </span><span class="c sq">acknowledgement</span><span class="c"> in the product documentation would be</span></div>
<div class="t mono" style="left:560px;top:142px"><span class="c">      appreciated but is not required.</span></div>
<div class="t mono" style="left:560px;top:162px"><span class="c"> *</span></div>
<div class="t mono" style="left:560px;top:182px"><span class="c"> * 2. Altered source versions must be plainly marked as such, and must not be</span></div>
<div class="t mono" style="left:560px;top:202px"><span class="c">      </span><span class="c sq">misrepresented</span><span class="c"> as being the original software.</span></div>
<div class="t mono" style="left:560px;top:222px"><span class="c"> *</span></div>
<div class="t mono" style="left:560px;top:242px"><span class="c"> * 3. This notice may not be removed or altered from any source distribution.</span></div>
<div class="t mono" style="left:560px;top:262px"><span class="c"> *</span></div>
<div class="t mono" style="left:560px;top:282px"><span class="c"> * $Date:        1. December 2016</span></div>
<div class="t mono" style="left:560px;top:302px"><span class="c"> * $Revision:    V2.4.4</span></div>
<div class="t mono" style="left:560px;top:322px"><span class="c"> *</span></div>
<div class="t mono" style="left:560px;top:342px"><span class="c"> * Project:      RTE Device Configuration for Si91x 2.0 B0 BRD4338A</span></div>
<div class="t mono" style="left:560px;top:362px"><span class="c"> * -------------------------------------------------------------------------- */</span></div>
<div class="t mono" style="left:560px;top:402px"><span class="c">//-------- &lt;&lt;&lt; Use Configuration Wizard in Context Menu &gt;&gt;&gt; --------------------</span></div>
<div class="t mono" style="left:560px;top:442px"><span class="k">#ifndef</span> __RTE_DEVICE_H</div>
<div class="t mono" style="left:560px;top:462px"><span class="k">#define</span> __RTE_DEVICE_H</div>
<div class="t mono" style="left:560px;top:502px"><span class="k">#if</span> 1</div>
<div class="t mono" style="left:560px;top:542px"><span class="k">#include</span> <span class="s">&quot;rsi_ccp_user_config.h&quot;</span></div>
<div class="t mono" style="left:560px;top:562px"><span class="k">#include</span> <span class="s">&quot;pin_config.h&quot;</span></div>
<div class="t mono" style="left:560px;top:602px"><span class="k">#define</span> ULP_GPIO_PORT_0    0 <span class="c">// GPIO port 0</span></div>
<div class="t mono" style="left:560px;top:622px"><span class="k">#define</span> ULP_GPIO_MODE_6   6  <span class="c">// ULP GPIO mode 6</span></div>
<div class="t mono" style="left:560px;top:642px"><span class="k">#define</span> HOST_PAD_GPIO_MIN 25 <span class="c">// GPIO host pad minimum pin number</span></div>
<div class="t mono" style="left:560px;top:662px"><span class="k">#define</span> HOST_PAD_GPIO_MAX 30 <span class="c">// GPIO host pad maximum pin number</span></div>
<svg style="left:974px;top:97px" width="126" height="3" viewBox="0 0 126 3"><polyline points="0,2.5 2,0.5 4,2.5 6,0.5 8,2.5 10,0.5 12,2.5 14,0.5 16,2.5 18,0.5 20,2.5 22,0.5 24,2.5 26,0.5 28,2.5 30,0.5 32,2.5 34,0.5 36,2.5 38,0.5 40,2.5 42,0.5 44,2.5 46,0.5 48,2.5 50,0.5 52,2.5 54,0.5 56,2.5 58,0.5 60,2.5 62,0.5 64,2.5 66,0.5 68,2.5 70,0.5 72,2.5 74,0.5 76,2.5 78,0.5 80,2.5 82,0.5 84,2.5 86,0.5 88,2.5 90,0.5 92,2.5 94,0.5 96,2.5 98,0.5 100,2.5 102,0.5 104,2.5 106,0.5 108,2.5 110,0.5 112,2.5 114,0.5 116,2.5 118,0.5 120,2.5 122,0.5 124,2.5 126,0.5" fill="none" stroke="#f2704a" stroke-width=".9"/></svg>
<svg style="left:740px;top:137px" width="135" height="3" viewBox="0 0 135 3"><polyline points="0,2.5 2,0.5 4,2.5 6,0.5 8,2.5 10,0.5 12,2.5 14,0.5 16,2.5 18,0.5 20,2.5 22,0.5 24,2.5 26,0.5 28,2.5 30,0.5 32,2.5 34,0.5 36,2.5 38,0.5 40,2.5 42,0.5 44,2.5 46,0.5 48,2.5 50,0.5 52,2.5 54,0.5 56,2.5 58,0.5 60,2.5 62,0.5 64,2.5 66,0.5 68,2.5 70,0.5 72,2.5 74,0.5 76,2.5 78,0.5 80,2.5 82,0.5 84,2.5 86,0.5 88,2.5 90,0.5 92,2.5 94,0.5 96,2.5 98,0.5 100,2.5 102,0.5 104,2.5 106,0.5 108,2.5 110,0.5 112,2.5 114,0.5 116,2.5 118,0.5 120,2.5 122,0.5 124,2.5 126,0.5 128,2.5 130,0.5 132,2.5 134,0.5" fill="none" stroke="#f2704a" stroke-width=".9"/></svg>
<svg style="left:614px;top:217px" width="126" height="3" viewBox="0 0 126 3"><polyline points="0,2.5 2,0.5 4,2.5 6,0.5 8,2.5 10,0.5 12,2.5 14,0.5 16,2.5 18,0.5 20,2.5 22,0.5 24,2.5 26,0.5 28,2.5 30,0.5 32,2.5 34,0.5 36,2.5 38,0.5 40,2.5 42,0.5 44,2.5 46,0.5 48,2.5 50,0.5 52,2.5 54,0.5 56,2.5 58,0.5 60,2.5 62,0.5 64,2.5 66,0.5 68,2.5 70,0.5 72,2.5 74,0.5 76,2.5 78,0.5 80,2.5 82,0.5 84,2.5 86,0.5 88,2.5 90,0.5 92,2.5 94,0.5 96,2.5 98,0.5 100,2.5 102,0.5 104,2.5 106,0.5 108,2.5 110,0.5 112,2.5 114,0.5 116,2.5 118,0.5 120,2.5 122,0.5 124,2.5 126,0.5" fill="none" stroke="#f2704a" stroke-width=".9"/></svg>
<div class="a" style="left:498px;top:677px;width:1382px;height:21px;background:#f0f0f0"></div>
<svg style="left:1865px;top:682px" width="7" height="10" viewBox="0 0 7 10"><path d="M.7 .7 5 5 .7 9.300" stroke="#bcbcbc" stroke-width="1.900" fill="none"/></svg>
<div class="a" style="left:1880px;top:79px;width:20px;height:598px;background:#f0f0f0"></div>
<div class="a" style="left:1880px;top:102px;width:20px;height:21px;background:#cdcdcd"></div>
<svg style="left:1884px;top:87px" width="10" height="7" viewBox="0 0 10 7"><path d="M.7 6 5 1.700 9.300 6" stroke="#404040" stroke-width="1.900" fill="none"/></svg>
<svg style="left:1884px;top:663px" width="10" height="7" viewBox="0 0 10 7"><path d="M.7 1 5 5.300 9.300 1" stroke="#404040" stroke-width="1.900" fill="none"/></svg>
<div class="a" style="left:1880px;top:677px;width:20px;height:21px;background:#f0f0f0"></div>
<div class="a" style="left:498px;top:698px;width:1416px;height:2px;background:#f0f0f0"></div>
<div class="a" style="left:497px;top:705px;width:1418px;height:272px;background:#fff;border:1px solid #a0a0a0;border-radius:3px 3px 0 0"></div>
<div class="a" style="left:498px;top:706px;width:1416px;height:23px;background:#ececec"></div>
<div class="a" style="left:498px;top:729px;width:1416px;height:1px;background:#a0a0a0"></div>
<div class="a" style="left:498px;top:705px;width:102px;height:25px;background:#fafafa;border:1px solid #a0a0a0;border-bottom:none;border-radius:3px 3px 0 0"></div>
<div class="t sg" style="left:519.90px;top:708.33px;font-size:15.5px;"><b class="k20">C</b><b class="k8">o</b><b class="k30">n</b><b class="k11">s</b><b class="k5">o</b><b class="k2">l</b><b class="k3">e</b></div>
<svg style="left:583.5px;top:713.5px" width="9.0" height="9.0" viewBox="0 0 9.0 9.0"><path d="M0 0 9.0 9.0M9.0 0 0 9.0" stroke="#222" stroke-width="1.1"/></svg>
<div class="t sg" style="left:498.07px;top:732.70px;color:#5f6368"><b class="k38">C</b><b class="k43">D</b><b class="k11">T</b><b class="k3"> </b><b class="k11">B</b><b class="k40">u</b><b class="k42">il</b><b class="k24">d</b><b class="k56"> </b><b class="k3">C</b><b class="k40">o</b><b class="k0">n</b><b class="k10">s</b><b class="k42">o</b><b class="k40">l</b><b class="k21">e</b><b class="k32"> </b><b class="k41">[</b><b class="k10">s</b><b class="k38">l</b><b class="k27">_</b><b class="k10">s</b><b class="k40">i</b><b class="k41">9</b><b class="k10">1</b><b class="k60">x</b><b class="k38">_</b><b class="k42">bl</b><b class="k40">i</b><b class="k10">n</b><b class="k43">k</b><b class="k60">y</b><b class="k26">_</b><b class="k24">t</b><b class="k0">e</b><b class="k41">s</b><b class="k61">t]</b></div>
<div class="a" style="left:498px;top:752px;width:1414px;height:1px;background:#a0a0a0"></div>
<div class="t mono" style="left:502px;top:755px;">Running task RPS create...</div>
<div class="t mono" style="left:502px;top:775px;">Running task convert...</div>
<div class="t mono" style="left:502px;top:795px;">Running task convert...</div>
<div class="t mono" style="left:502px;top:815px;">Running task convert...</div>
<div class="t mono" style="left:502px;top:835px;">DONE</div>
<div class="t mono" style="left:502px;top:895px;color:#1212ff;">17:10:39 Build Finished. 0 errors, 0 warnings. (took 19s.60ms)</div>
<div class="a" style="left:1893px;top:754px;width:19px;height:200px;background:#f0f0f0"></div>
<svg style="left:1897px;top:761px" width="10" height="7" viewBox="0 0 10 7"><path d="M.7 6 5 1.700 9.300 6" stroke="#404040" stroke-width="1.900" fill="none"/></svg>
<div class="a" style="left:1893px;top:911px;width:19px;height:21px;background:#cdcdcd"></div>
<svg style="left:1897px;top:939px" width="10" height="7" viewBox="0 0 10 7"><path d="M.7 1 5 5.300 9.300 1" stroke="#404040" stroke-width="1.900" fill="none"/></svg>
<div class="a" style="left:498px;top:954px;width:1416px;height:22px;background:#f0f0f0"></div>
<div class="a" style="left:498px;top:730px;width:2px;height:246px;background:#f0f0f0"></div>
<div class="a" style="left:521px;top:954px;width:53px;height:19px;background:#cdcdcd"></div>
<svg style="left:506px;top:959px" width="7" height="10" viewBox="0 0 7 10"><path d="M5.300 .7 1 5 5.300 9.300" stroke="#404040" stroke-width="1.900" fill="none"/></svg>
<svg style="left:1878px;top:959px" width="7" height="10" viewBox="0 0 7 10"><path d="M.7 .7 5 5 .7 9.300" stroke="#404040" stroke-width="1.900" fill="none"/></svg>
<svg style="left:1533px;top:711px" width="13" height="12" viewBox="0 0 13 12"><path d="M2.200 2.200 10.800 9.800M10.800 2.200 2.200 9.800" stroke="#636363" stroke-width="3.800" stroke-linecap="round"/></svg>
<div class="a" style="left:1553px;top:708px;width:1px;height:18px;background:#8a8a8a"></div>
<svg style="left:1563px;top:710px" width="14" height="14" viewBox="0 0 14 14"><path d="M4.500 .8h5v6h3.200L7 13.200 1.300 6.800H4.500z" fill="#ffe9a6" stroke="#c98a12" stroke-width="1.100" stroke-linejoin="round"/></svg>
<svg style="left:1586px;top:710px" width="14" height="14" viewBox="0 0 14 14"><path d="M4.500 13.200h5v-6h3.200L7 .8 1.300 7.200H4.500z" fill="#ffe9a6" stroke="#c98a12" stroke-width="1.100" stroke-linejoin="round"/></svg>
<div class="a" style="left:1605px;top:706px;width:23px;height:22px;background:#cce4f7;border:1px solid #99d1ff"></div>
<svg style="left:1609px;top:709px" width="16" height="16" viewBox="0 0 16 16"><path d="M5.500 .8.800 4.200 5.500 7.600V5.500H11.500V3H5.500z" fill="#fdf0c4" stroke="#c98a12" stroke-linejoin="round"/><path d="M10.500 7.400 15.200 10.800 10.500 14.200V12H4.500V9.500H10.500z" fill="#fdf0c4" stroke="#c98a12" stroke-linejoin="round"/></svg>
<div class="a" style="left:1630px;top:708px;width:1px;height:18px;background:#8a8a8a"></div>
<svg style="left:1640px;top:710px" width="15" height="15" viewBox="0 0 15 15"><rect x=".5" y="1.500" width="9" height="12" fill="#eef0f4" stroke="#b4bac4"/><rect x="2" y="8.500" width="5" height="5" fill="#c8d0e0" stroke="#98a4bc"/><rect x="11.500" y="1.500" width="3" height="3" fill="#fff" stroke="#8a9cc0"/><rect x="11.500" y="6" width="3" height="3" fill="#fff" stroke="#8a9cc0"/><rect x="11.500" y="10.500" width="3" height="3" fill="#fff" stroke="#8a9cc0"/></svg>
<svg style="left:1662px;top:710px" width="16" height="15" viewBox="0 0 16 15"><rect x="3.500" y=".5" width="7" height="12" fill="#eef0f4" stroke="#b4bac4"/><rect x="12.500" y="1.500" width="3" height="3" fill="#fff" stroke="#8a9cc0"/><rect x="12.500" y="6" width="3" height="3" fill="#fff" stroke="#8a9cc0"/><rect x="12.500" y="10.500" width="3" height="3" fill="#fff" stroke="#8a9cc0"/><rect x=".5" y="8.500" width="7" height="6" rx="1" fill="#f3c84a" stroke="#a8821a"/><path d="M2 8.500v-2q2-2.500 4 0v2" fill="none" stroke="#8a7a4a" stroke-width="1.200"/></svg>
<svg style="left:1692px;top:712px" width="8" height="5" viewBox="0 0 8 5"><path d="M0 .5h8M0 4.500h8" stroke="#c4c4c4" stroke-width="1"/></svg>
<svg style="left:1709px;top:709px" width="16" height="16" viewBox="0 0 16 16"><path d="M.5 .5h6l3 3v10h-9z" fill="#fffdf4" stroke="#b09a58"/><path d="M2 4.500h4M2 6.500h6M2 8.500h6M2 10.500h6" stroke="#6b88b8" stroke-width=".9"/><path d="M9 9.500l5.500 5.500M14.500 9.500 9 15" stroke="#777" stroke-width="2.200"/></svg>
<div class="a" style="left:1728px;top:706px;width:23px;height:22px;background:#cce4f7;border:1px solid #99d1ff"></div>
<svg style="left:1732px;top:709px" width="16" height="15" viewBox="0 0 16 15"><rect x="4.500" y=".5" width="11" height="8" rx="1" fill="#f4f8ff" stroke="#4f7fd0" stroke-width="1.200"/><path d="M7 3.500h6M7 5.500h4" stroke="#4f7fd0"/><rect x=".5" y="6.500" width="7" height="5" fill="#f4f8ff" stroke="#3a5fa8"/><path d="M2 14h5M4.500 11.500V14" stroke="#3a5fa8" stroke-width="1.200"/></svg>
<div class="a" style="left:1753px;top:708px;width:1px;height:18px;background:#8a8a8a"></div>
<svg style="left:1764px;top:709px" width="15" height="15" viewBox="0 0 15 15"><rect x=".5" y="4.500" width="12" height="9" fill="#f4f8ff" stroke="#8aa0c0"/><rect x=".5" y="4.500" width="12" height="2.200" fill="#5a8fd8"/><circle cx="11.500" cy="3" r="2.600" fill="#35a84a" stroke="#1f7a30" stroke-width=".8"/><path d="M9.500 5 6.500 9" stroke="#444" stroke-width="1.100"/></svg>
<svg style="left:1788px;top:709px" width="14" height="14" viewBox="0 0 14 14"><rect x=".8" y=".8" width="12" height="9" rx="1.500" fill="#f4f8ff" stroke="#2f5fb8" stroke-width="1.600"/><path d="M3.500 4h5M3.500 6.500h6.500" stroke="#4f6fb0"/><path d="M3 13h8M7 10v3" stroke="#2f5fb8" stroke-width="1.500"/></svg>
<svg style="left:1809px;top:715px" width="10" height="6" viewBox="0 0 10 6"><path d="M0.5 0.5h9l-4.5 5z" fill="#000"/></svg>
<svg style="left:1829px;top:709px" width="16" height="15" viewBox="0 0 16 15"><rect x=".5" y="3.500" width="13" height="11" fill="#f4f8ff" stroke="#b8a058"/><rect x=".5" y="3.500" width="13" height="2.200" fill="#5a8fd8"/><path d="M12 0l1 2.300 2.500.3-1.800 1.700.5 2.500L12 5.600 9.800 6.800l.5-2.500L8.500 2.600l2.500-.3z" fill="#fff3b0" stroke="#c79a22" stroke-width=".8"/></svg>
<svg style="left:1851px;top:715px" width="10" height="6" viewBox="0 0 10 6"><path d="M0.5 0.5h9l-4.5 5z" fill="#000"/></svg>
<svg style="left:1872px;top:711px" width="10" height="4" viewBox="0 0 10 4"><rect x=".5" y=".5" width="9" height="3" fill="#fff" stroke="#000" stroke-width="1"/></svg>
<svg style="left:1895px;top:711px" width="10" height="10" viewBox="0 0 10 10"><rect x=".5" y=".5" width="9" height="9" fill="#fff" stroke="#000" stroke-width="1"/><path d="M1 2.500h8" stroke="#333" stroke-width="1"/></svg>
<div class="a" style="left:220px;top:100px;width:364px;height:716px;background:#f2f2f2;border:1px solid #ccc;box-shadow:2px 2px 2px rgba(0,0,0,.55)"></div>
<div class="t sg" style="left:256.90px;top:105.83px;font-size:15.5px;"><b class="k9">Ne</b><b class="k19">w</b></div>
<svg style="left:565px;top:109.5px" width="6" height="10" viewBox="0 0 6 10"><path d="M1 1 5 5 1 9" stroke="#404040" stroke-width="1.4" fill="none"/></svg>
<div class="t sg" style="left:255.94px;top:129.83px;font-size:15.5px;"><b class="k20">G</b><b class="k2">o</b><b class="k9"> </b><b class="k22">I</b><b class="k2">n</b><b class="k5">t</b><b class="k32">o</b></div>
<div class="a" style="left:253px;top:154px;width:328px;height:1px;background:#d7d7d7"></div>
<div class="t sg" style="left:256.47px;top:160.83px;font-size:15.5px;"><b class="k41">O</b><b class="k8">p</b><b class="k3">e</b><b class="k10">n</b><b class="k14"> </b><b class="k2">i</b><b class="k10">n</b><b class="k33"> </b><b class="k9">Ne</b><b class="k33">w</b><b class="k10"> </b><b class="k2">Wi</b><b class="k8">n</b><b class="k18">d</b><b class="k14">o</b><b class="k19">w</b></div>
<div class="t sg" style="left:255.83px;top:184.83px;font-size:15.5px;"><b class="k16">S</b><b class="k8">h</b><b class="k14">o</b><b class="k33">w</b><b class="k21"> </b><b class="k10">I</b><b class="k3">n</b></div>
<div class="t sg" style="left:477.83px;top:184.83px;font-size:15.5px;"><b class="k14">A</b><b class="k6">l</b><b class="k61">t</b><b class="k11">+</b><b class="k16">S</b><b class="k2">h</b><b class="k6">i</b><b class="k7">f</b><b class="k61">t</b><b class="k40">+</b><b class="k29">W</b></div>
<svg style="left:565px;top:188.5px" width="6" height="10" viewBox="0 0 6 10"><path d="M1 1 5 5 1 9" stroke="#404040" stroke-width="1.4" fill="none"/></svg>
<div class="a" style="left:253px;top:209px;width:328px;height:1px;background:#d7d7d7"></div>
<div class="t sg" style="left:255.90px;top:214.83px;font-size:15.5px;"><b class="k20">C</b><b class="k18">o</b><b class="k19">p</b><b class="k23">y</b></div>
<div class="t sg" style="left:517.90px;top:214.83px;font-size:15.5px;"><b class="k23">C</b><b class="k25">t</b><b class="k24">r</b><b class="k46">l</b><b class="k3">+</b><b class="k57">C</b></div>
<svg style="left:229px;top:217px" width="15" height="15" viewBox="0 0 15 15"><path d="M.5 .5h6.500l1 1v11h-7.500z" fill="#e6edf6" stroke="#8f9298"/><path d="M.5 .5h6.500" stroke="#b8a468"/><path d="M1.500 3.500h1.500M1.500 5.500h1.500M1.500 7.500h1.500M1.500 9.500h1.500" stroke="#6a86b8"/><path d="M3.500 2h7l3.500 3.500v9h-10.500z" fill="#f4f8fc" stroke="#8a8f96"/><path d="M3.500 2h7l3.500 3.500" fill="none" stroke="#b8a468"/><path d="M10.500 2v3.500h3.500" fill="#f0e2b0" stroke="#b8a468" stroke-width=".8"/><path d="M5.500 5.500h4M5.500 7.500h6.500M5.500 9.500h6.500M5.500 11.500h6.500M5.500 13.500h4" stroke="#5a78b0"/></svg>
<div class="t sg" style="left:255.68px;top:236.83px;font-size:15.5px;"><b class="k55">P</b><b class="k16">a</b><b class="k38">s</b><b class="k33">t</b><b class="k20">e</b></div>
<div class="t sg" style="left:517.90px;top:236.83px;font-size:15.5px;"><b class="k23">C</b><b class="k25">t</b><b class="k24">r</b><b class="k46">l</b><b class="k19">+</b><b class="k28">V</b></div>
<svg style="left:230px;top:239px" width="14" height="16" viewBox="0 0 14 16"><defs><linearGradient id="pg" x1="0" x2="1"><stop offset="0" stop-color="#fbe3ae"/><stop offset="1" stop-color="#efc070"/></linearGradient></defs><rect x=".5" y="2.500" width="11" height="12.500" rx="1.200" fill="url(#pg)" stroke="#b08040"/><path d="M3 3.500q0-3 3-3t3 3z" fill="#93a2bd" stroke="#6a7a98" stroke-width=".8"/><path d="M5.500 5.500h5l3 3v7h-8z" fill="#f4f8fc" stroke="#8a94a4"/><path d="M10.500 5.500v3h3" fill="#f0e2b0" stroke="#b8a468" stroke-width=".8"/><path d="M7.500 9.500h2M7.500 11.500h4M7.500 13.500h4" stroke="#5a78b0"/></svg>
<div class="t sg" style="left:256.86px;top:258.83px;font-size:15.5px;"><b class="k43">D</b><b class="k8">el</b><b class="k2">et</b><b class="k11">e</b></div>
<div class="t sg" style="left:517.36px;top:258.83px;font-size:15.5px;"><b class="k43">D</b><b class="k8">el</b><b class="k2">et</b><b class="k11">e</b></div>
<svg style="left:230px;top:261px" width="13" height="14" viewBox="0 0 13 14"><defs><linearGradient id="dg" x1="0" x2="0" y1="0" y2="1"><stop offset="0" stop-color="#f4888c"/><stop offset=".5" stop-color="#e8454c"/><stop offset="1" stop-color="#d8323a"/></linearGradient></defs><path d="M2.600 3 10.400 11M10.400 3 2.600 11" stroke="#d03038" stroke-width="4.600" stroke-linecap="round"/><path d="M2.600 3 10.400 11M10.400 3 2.600 11" stroke="url(#dg)" stroke-width="3.600" stroke-linecap="round"/></svg>
<div class="t sg" style="left:257.04px;top:281.83px;font-size:15.5px;"><b class="k25">M</b><b class="k19">o</b><b class="k11">v</b><b class="k0">e</b><b class="k36">...</b></div>
<div class="t sg" style="left:255.90px;top:305.83px;font-size:15.5px;"><b class="k12">R</b><b class="k3">en</b><b class="k33">am</b><b class="k0">e</b><b class="k36">...</b></div>
<div class="t sg" style="left:544.77px;top:305.83px;font-size:15.5px;"><b class="k35">F</b><b class="k3">2</b></div>
<div class="t sg" style="left:255.83px;top:329.83px;font-size:15.5px;"><b class="k4">S</b><b class="k8">o</b><b class="k9">u</b><b class="k10">r</b><b class="k11">c</b><b class="k3">e</b></div>
<svg style="left:565px;top:333.5px" width="6" height="10" viewBox="0 0 6 10"><path d="M1 1 5 5 1 9" stroke="#404040" stroke-width="1.4" fill="none"/></svg>
<div class="a" style="left:253px;top:354px;width:328px;height:1px;background:#d7d7d7"></div>
<div class="t sg" style="left:256.85px;top:360.83px;font-size:15.5px;"><b class="k8">I</b><b class="k25">m</b><b class="k18">p</b><b class="k14">o</b><b class="k25">r</b><b class="k7">t</b></div>
<svg style="left:565px;top:364.5px" width="6" height="10" viewBox="0 0 6 10"><path d="M1 1 5 5 1 9" stroke="#404040" stroke-width="1.4" fill="none"/></svg>
<div class="a" style="left:253px;top:385px;width:328px;height:1px;background:#d7d7d7"></div>
<div class="t sg" style="left:256.33px;top:391.83px;font-size:15.5px;"><b class="k4">B</b><b class="k2">u</b><b class="k1">i</b><b class="k5">l</b><b class="k13">d</b><b class="k36"> </b><b class="k17">P</b><b class="k14">r</b><b class="k5">o</b><b class="k2">j</b><b class="k11">e</b><b class="k2">c</b><b class="k7">t</b></div>
<div class="t sg" style="left:255.90px;top:415.83px;font-size:15.5px;"><b class="k26">C</b><b class="k2">l</b><b class="k3">ea</b><b class="k10">n</b><b class="k36"> </b><b class="k17">P</b><b class="k14">r</b><b class="k5">o</b><b class="k2">j</b><b class="k11">e</b><b class="k2">c</b><b class="k7">t</b></div>
<div class="t sg" style="left:255.90px;top:438.83px;font-size:15.5px;"><b class="k12">R</b><b class="k13">e</b><b class="k25">f</b><b class="k9">r</b><b class="k30">es</b><b class="k3">h</b></div>
<div class="t sg" style="left:544.77px;top:438.83px;font-size:15.5px;"><b class="k35">F</b><b class="k3">5</b></div>
<svg style="left:229px;top:441px" width="15" height="15" viewBox="0 0 15 15"><path d="M3.500 .5h7l3.500 3.500v10h-10.500z" fill="#e9f0fa" stroke="#a8a490"/><path d="M3.500 14V.5h7l3.500 3.500" fill="none" stroke="#c8b070"/><path d="M10.500 .5v3.500h3.500" fill="#e8d8a0" stroke="#c8b070" stroke-width=".8"/><g fill="#f3c13a" stroke="#d89a18" stroke-width=".7" stroke-linejoin="round"><path d="M1 6.500Q1.200 3 4 3q2 0 3 1.500l1-1 .3 3.800-3.600-.5 1-1Q5 4.800 4 4.900 2.800 5 2.700 6.500z"/><path d="M7 9Q6.800 12.500 4 12.500q-2 0-3-1.500l-1 1-.3-3.800 3.600.5-1 1q.7 1 1.700.9Q5.200 10.500 5.300 9z"/></g></svg>
<div class="t sg" style="left:255.90px;top:461.83px;font-size:15.5px;"><b class="k26">C</b><b class="k5">l</b><b class="k11">o</b><b class="k30">s</b><b class="k10">e</b><b class="k36"> </b><b class="k17">P</b><b class="k14">r</b><b class="k5">o</b><b class="k2">j</b><b class="k11">e</b><b class="k2">c</b><b class="k7">t</b></div>
<div class="t sg" style="left:255.90px;top:485.83px;font-size:15.5px;color:#6d6d6d;"><b class="k26">C</b><b class="k5">l</b><b class="k11">o</b><b class="k30">s</b><b class="k10">e</b><b class="k23"> </b><b class="k20">U</b><b class="k9">nr</b><b class="k2">el</b><b class="k13">at</b><b class="k8">e</b><b class="k13">d</b><b class="k36"> </b><b class="k17">P</b><b class="k14">r</b><b class="k5">o</b><b class="k2">j</b><b class="k11">e</b><b class="k2">c</b><b class="k7">t</b></div>
<div class="a" style="left:253px;top:510px;width:328px;height:1px;background:#d7d7d7"></div>
<div class="t sg" style="left:256.33px;top:516.83px;font-size:15.5px;"><b class="k4">B</b><b class="k2">u</b><b class="k1">i</b><b class="k5">l</b><b class="k13">d</b><b class="k17"> </b><b class="k20">C</b><b class="k8">o</b><b class="k13">n</b><b class="k6">f</b><b class="k5">i</b><b class="k8">g</b><b class="k9">ur</b><b class="k13">a</b><b class="k6">t</b><b class="k5">i</b><b class="k8">o</b><b class="k30">n</b><b class="k31">s</b></div>
<svg style="left:565px;top:520.5px" width="6" height="10" viewBox="0 0 6 10"><path d="M1 1 5 5 1 9" stroke="#404040" stroke-width="1.4" fill="none"/></svg>
<div class="t sg" style="left:256.85px;top:540.83px;font-size:15.5px;"><b class="k10">I</b><b class="k8">nd</b><b class="k11">e</b><b class="k23">x</b></div>
<svg style="left:565px;top:544.5px" width="6" height="10" viewBox="0 0 6 10"><path d="M1 1 5 5 1 9" stroke="#404040" stroke-width="1.4" fill="none"/></svg>
<div class="a" style="left:253px;top:565px;width:328px;height:1px;background:#d7d7d7"></div>
<div class="a" style="left:223px;top:569px;width:358px;height:22px;background:#91c9f7"></div>
<div class="t sg" style="left:255.90px;top:570.83px;font-size:15.5px;"><b class="k12">R</b><b class="k3">u</b><b class="k10">n</b><b class="k21"> </b><b class="k56">A</b><b class="k31">s</b></div>
<svg style="left:565px;top:574.5px" width="6" height="10" viewBox="0 0 6 10"><path d="M1 1 5 5 1 9" stroke="#404040" stroke-width="1.4" fill="none"/></svg>
<svg style="left:229px;top:573px" width="14" height="14" viewBox="0 0 14 14"><defs><linearGradient id="rg" x1="0" x2="0" y1="0" y2="1"><stop offset="0" stop-color="#86cf62"/><stop offset="1" stop-color="#2c9646"/></linearGradient></defs><circle cx="7" cy="7" r="6.500" fill="url(#rg)" stroke="#2a8040"/><path d="M4.800 2.800 11 7.200 4.800 11.600z" fill="#fff"/></svg>
<div class="t sg" style="left:256.90px;top:592.83px;font-size:15.5px;"><b class="k9">D</b><b class="k8">ebu</b><b class="k13">g</b><b class="k21"> </b><b class="k56">A</b><b class="k31">s</b></div>
<svg style="left:565px;top:596.5px" width="6" height="10" viewBox="0 0 6 10"><path d="M1 1 5 5 1 9" stroke="#404040" stroke-width="1.4" fill="none"/></svg>
<svg style="left:229px;top:595px" width="16" height="17.0" viewBox="0 0 16 17"><g stroke="#3b8a70" stroke-width="1.100" fill="none" stroke-linecap="round">
<path d="M4.300 1 4.700 3.500M8.700 1.800 7.800 4.300M.3 5 3.500 5.400M1.200 9.700 4.400 8.900M4.600 11.300 4.300 13.200 5.200 14.800M8.300 12.800 8.800 14.500 10 15.800M9.800 5.600 12 4.600 14 5.200M11.300 9 13.500 9 15 10.200"/></g>
<ellipse cx="7.600" cy="8.200" rx="2.900" ry="4.200" transform="rotate(-35 7.600 8.200)" fill="#bfe2aa" stroke="#2a8aa0" stroke-width="1"/>
<path d="M6.300 6.500 9.500 10.500" stroke="#8cc47c" stroke-width=".9"/>
<circle cx="4.700" cy="4.600" r="1.300" fill="#d4ecc4" stroke="#2a8aa0" stroke-width=".9"/></svg>
<div class="t sg" style="left:255.83px;top:615.83px;font-size:15.5px;"><b class="k17">P</b><b class="k14">r</b><b class="k1">o</b><b class="k6">f</b><b class="k1">i</b><b class="k2">l</b><b class="k10">e</b><b class="k21"> </b><b class="k56">A</b><b class="k31">s</b></div>
<svg style="left:565px;top:619.5px" width="6" height="10" viewBox="0 0 6 10"><path d="M1 1 5 5 1 9" stroke="#404040" stroke-width="1.4" fill="none"/></svg>
<div class="t sg" style="left:256.14px;top:639.83px;font-size:15.5px;"><b class="k36">T</b><b class="k38">e</b><b class="k43">a</b><b class="k15">m</b></div>
<svg style="left:565px;top:643.5px" width="6" height="10" viewBox="0 0 6 10"><path d="M1 1 5 5 1 9" stroke="#404040" stroke-width="1.4" fill="none"/></svg>
<div class="t sg" style="left:255.90px;top:663.83px;font-size:15.5px;"><b class="k20">C</b><b class="k25">om</b><b class="k8">p</b><b class="k9">ar</b><b class="k10">e </b><b class="k2">W</b><b class="k6">i</b><b class="k13">t</b><b class="k3">h</b></div>
<svg style="left:565px;top:667.5px" width="6" height="10" viewBox="0 0 6 10"><path d="M1 1 5 5 1 9" stroke="#404040" stroke-width="1.4" fill="none"/></svg>
<div class="t sg" style="left:255.90px;top:687.83px;font-size:15.5px;"><b class="k12">R</b><b class="k30">e</b><b class="k22">s</b><b class="k1">t</b><b class="k14">o</b><b class="k9">r</b><b class="k10">e</b><b class="k24"> </b><b class="k25">f</b><b class="k14">r</b><b class="k25">o</b><b class="k8">m</b><b class="k0"> </b><b class="k3">L</b><b class="k19">o</b><b class="k11">c</b><b class="k2">a</b><b class="k14">l</b><b class="k33"> </b><b class="k24">H</b><b class="k3">i</b><b class="k22">s</b><b class="k1">t</b><b class="k14">o</b><b class="k10">r</b><b class="k56">y</b><b class="k36">...</b></div>
<div class="a" style="left:253px;top:712px;width:328px;height:1px;background:#d7d7d7"></div>
<div class="t sg" style="left:256.33px;top:717.83px;font-size:15.5px;"><b class="k23">B</b><b class="k14">ro</b><b class="k0">w</b><b class="k30">s</b><b class="k10">e</b><b class="k12"> </b><b class="k0">F</b><b class="k1">i</b><b class="k2">l</b><b class="k30">e</b><b class="k56">s</b><b class="k33"> </b><b class="k9">Her</b><b class="k3">e</b></div>
<svg style="left:228px;top:720px" width="16" height="13" viewBox="0 0 16 13"><rect x=".5" y=".5" width="15" height="12" fill="#fff" stroke="#9090c4"/><rect x="1" y="1" width="14" height="2" fill="#aeb0dc"/><rect x="4" y="3.500" width="3" height="2" fill="#2a80d0"/><rect x="10" y="3.500" width="3" height="2" fill="#20a030"/><rect x="4" y="8" width="3" height="2" fill="#f09010"/><rect x="10" y="8" width="3" height="2" fill="#4060d0"/><path d="M4 7h3M10 7h3M4 11.500h3M10 11.500h3" stroke="#b8b8b8"/></svg>
<div class="t sg" style="left:256.47px;top:739.83px;font-size:15.5px;"><b class="k41">O</b><b class="k8">p</b><b class="k3">e</b><b class="k10">n</b><b class="k17"> </b><b class="k20">C</b><b class="k25">o</b><b class="k14">m</b><b class="k33">m</b><b class="k3">a</b><b class="k8">n</b><b class="k13">d</b><b class="k0"> </b><b class="k22">L</b><b class="k2">i</b><b class="k3">n</b><b class="k10">e</b><b class="k33"> </b><b class="k9">Her</b><b class="k3">e</b></div>
<svg style="left:229px;top:741px" width="14" height="15" viewBox="0 0 14 15"><rect x=".5" y=".5" width="13" height="12.500" fill="#0c0c0c" stroke="#a8a8a8"/><rect x="1" y="1" width="12" height="2.500" fill="#cfcfcf"/><path d="M2.500 5l2.200 1.600-2.200 1.600" stroke="#fff" stroke-width="1" fill="none"/><path d="M5.500 9h2.500" stroke="#999" stroke-width=".8"/><path d="M1 14h12" stroke="#c4c4c4" stroke-width="1"/></svg>
<div class="t sg" style="left:255.90px;top:762.83px;font-size:15.5px;"><b class="k20">C</b><b class="k8">o</b><b class="k13">n</b><b class="k6">f</b><b class="k5">i</b><b class="k8">g</b><b class="k9">ur</b><b class="k3">e</b></div>
<svg style="left:565px;top:766.5px" width="6" height="10" viewBox="0 0 6 10"><path d="M1 1 5 5 1 9" stroke="#404040" stroke-width="1.4" fill="none"/></svg>
<div class="a" style="left:253px;top:787px;width:328px;height:1px;background:#d7d7d7"></div>
<div class="t sg" style="left:255.83px;top:793.83px;font-size:15.5px;"><b class="k17">P</b><b class="k14">r</b><b class="k18">o</b><b class="k8">p</b><b class="k9">e</b><b class="k25">r</b><b class="k6">t</b><b class="k2">i</b><b class="k30">e</b><b class="k31">s</b></div>
<div class="t sg" style="left:497.83px;top:793.83px;font-size:15.5px;"><b class="k14">A</b><b class="k6">l</b><b class="k61">t</b><b class="k11">+</b><b class="k16">E</b><b class="k13">nt</b><b class="k9">e</b><b class="k15">r</b></div>
<div class="a" style="left:578px;top:566px;width:283px;height:58px;background:#f2f2f2;border:1px solid #ccc;box-shadow:2px 2px 2px rgba(0,0,0,.55)"></div>
<div class="a" style="left:581px;top:569px;width:277px;height:22px;background:#91c9f7"></div>
<svg style="left:586px;top:572px" width="15" height="15" viewBox="0 0 15 15"><rect x="2.500" y="2.500" width="10" height="10" rx="2" fill="none" stroke="#3a6888" stroke-width="1.100"/><rect x="4" y="4" width="7" height="7" fill="#b4cf3c"/><rect x="4" y="4" width="7" height="3" fill="#c0d840" opacity=".6"/><g stroke="#35607e" stroke-width="1"><path d="M4.500 0v1.500M6.500 0v1.500M8.500 0v1.500M10.500 0v1.500M4.500 13.500v1.500M6.500 13.500v1.500M8.500 13.500v1.500M10.500 13.500v1.500M0 4.500h1.500M0 6.500h1.500M0 8.500h1.500M0 10.500h1.500M13.500 4.500h1.500M13.500 6.500h1.500M13.500 8.500h1.500M13.500 10.500h1.500"/></g></svg>
<div class="t sg" style="left:614.67px;top:571.33px;font-size:15.5px;"><b class="k43">1</b><b class="k28"> </b><b class="k0">S</b><b class="k37">il</b><b class="k15">i</b><b class="k19">c</b><b class="k15">o</b><b class="k43">n</b><b class="k4"> </b><b class="k51">L</b><b class="k15">a</b><b class="k11">b</b><b class="k56">s</b><b class="k41"> </b><b class="k36">A</b><b class="k48">R</b><b class="k15">M</b><b class="k28"> </b><b class="k36">P</b><b class="k13">r</b><b class="k44">o</b><b class="k13">g</b><b class="k10">r</b><b class="k21">a</b><b class="k13">m</b></div>
<div class="a" style="left:611px;top:594px;width:247px;height:1px;background:#d7d7d7"></div>
<div class="t sg" style="left:613.90px;top:601.33px;font-size:15.5px;"><b class="k12">R</b><b class="k3">u</b><b class="k10">n</b><b class="k17"> </b><b class="k20">C</b><b class="k8">o</b><b class="k13">n</b><b class="k6">f</b><b class="k5">i</b><b class="k8">g</b><b class="k9">ur</b><b class="k13">a</b><b class="k6">t</b><b class="k5">i</b><b class="k8">o</b><b class="k30">n</b><b class="k35">s</b><b class="k36">...</b></div>
</body></html>
